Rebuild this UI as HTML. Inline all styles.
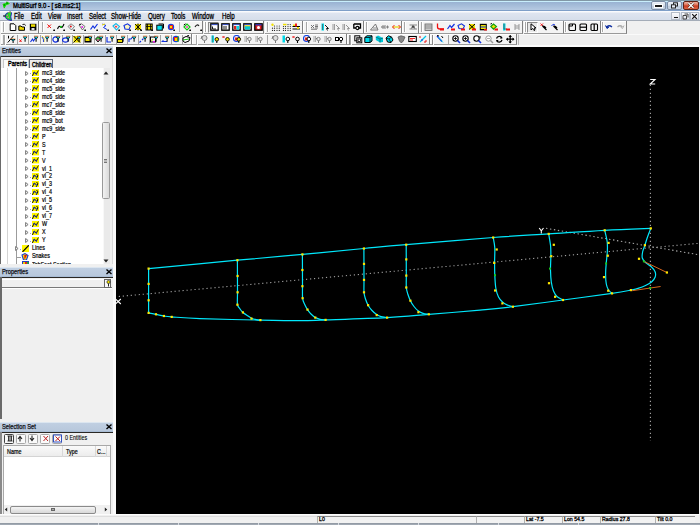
<!DOCTYPE html><html><head><meta charset="utf-8"><style>
*{margin:0;padding:0;box-sizing:border-box}
html,body{width:700px;height:525px;overflow:hidden;background:#f0f0f0;font-family:"Liberation Sans",sans-serif;color:#000}
.a{position:absolute}
.t{position:absolute;font-size:6.6px;line-height:8px;white-space:nowrap;-webkit-text-stroke:0.15px #000}
#title{left:0;top:0;width:700px;height:11px;background:linear-gradient(#3a4250 0,#c8eefc 1px,#c8eefc 1.5px,#98b2d2 2px,#b6cae2 10px,#7f9fc8 10px,#7f9fc8 11px)}
#menu{left:0;top:11px;width:700px;height:10px;background:linear-gradient(#fafbfd 0,#fafbfd 1px,#dfe5f0 2px,#d6deea 9px,#a4acb8 9px)}
#view{left:116px;top:47px;width:583px;height:467px;background:#000}
.cap{position:absolute;left:0;width:113px;height:9.5px;background:linear-gradient(#dce6f0 0,#dce6f0 0.8px,#c0cfe2 1px,#b8c8dc 8.5px,#a8bcd4 9.5px)}
.capl{position:absolute;left:0;width:113px;height:1.2px;background:#2a2824}
.tb{position:absolute;background:#f7f7f7;border:1px solid #d6d6d6;border-top-color:#fff;border-left-color:#fff}
.tr{font-size:7px;transform:scaleX(0.77);transform-origin:0 0;-webkit-text-stroke:0.22px #000}
.ts{font-size:5.8px;line-height:7px;transform:scaleX(0.9);transform-origin:0 0;-webkit-text-stroke:0.3px #000}
.sep{position:absolute;width:1px;background:#9a9a9a}
</style></head><body>
<div class="a" id="title"></div>
<div class="t" style="left:13px;top:1.5px;font-size:7.4px;color:#000;-webkit-text-stroke:0.38px #000;transform:scaleX(0.8);transform-origin:0 0">MultiSurf 9.0 - [ s8.ms2:1]</div>
<div class="a" style="left:650.5px;top:1px;width:15px;height:9px;border:1px solid #7d8ea6;border-radius:2px;background:linear-gradient(#eef3fa,#d4deea 50%,#bccadc 51%,#ccd8e6)"></div>
<div class="a" style="left:654.5px;top:4.5px;width:7px;height:2.5px;background:#1a1a1a;outline:0.7px solid #fff"></div>
<div class="a" style="left:666.5px;top:1px;width:15.5px;height:9px;border:1px solid #7d8ea6;border-radius:2px;background:linear-gradient(#eef3fa,#d4deea 50%,#bccadc 51%,#ccd8e6)"></div>
<svg class="a" style="left:670px;top:2px" width="9" height="7"><rect x="3.5" y="0.8" width="4" height="3.2" fill="none" stroke="#222" stroke-width="1"/><rect x="1.5" y="2.8" width="4" height="3.2" fill="#e8eef6" stroke="#222" stroke-width="1"/></svg>
<div class="a" style="left:682.5px;top:1px;width:16.5px;height:9px;border:1px solid #5e2418;border-radius:2px;background:linear-gradient(#f0b8a8,#dc6a50 45%,#c83a20 55%,#e06848)"></div>
<svg class="a" style="left:686px;top:2px" width="10" height="7"><path d="M2.5 1 L7.5 6 M7.5 1 L2.5 6" stroke="#3a1a10" stroke-width="2.4"/><path d="M2.5 1 L7.5 6 M7.5 1 L2.5 6" stroke="#fff" stroke-width="1.4"/></svg>
<div class="a" id="menu"></div>
<div class="t" style="left:14px;top:11.6px;font-size:8.2px;line-height:9px;-webkit-text-stroke:0.3px #000;transform:scaleX(0.75);transform-origin:0 0">File</div>
<div class="t" style="left:31px;top:11.6px;font-size:8.2px;line-height:9px;-webkit-text-stroke:0.3px #000;transform:scaleX(0.75);transform-origin:0 0">Edit</div>
<div class="t" style="left:48px;top:11.6px;font-size:8.2px;line-height:9px;-webkit-text-stroke:0.3px #000;transform:scaleX(0.75);transform-origin:0 0">View</div>
<div class="t" style="left:67px;top:11.6px;font-size:8.2px;line-height:9px;-webkit-text-stroke:0.3px #000;transform:scaleX(0.75);transform-origin:0 0">Insert</div>
<div class="t" style="left:89px;top:11.6px;font-size:8.2px;line-height:9px;-webkit-text-stroke:0.3px #000;transform:scaleX(0.75);transform-origin:0 0">Select</div>
<div class="t" style="left:111px;top:11.6px;font-size:8.2px;line-height:9px;-webkit-text-stroke:0.3px #000;transform:scaleX(0.75);transform-origin:0 0">Show-Hide</div>
<div class="t" style="left:148px;top:11.6px;font-size:8.2px;line-height:9px;-webkit-text-stroke:0.3px #000;transform:scaleX(0.75);transform-origin:0 0">Query</div>
<div class="t" style="left:171px;top:11.6px;font-size:8.2px;line-height:9px;-webkit-text-stroke:0.3px #000;transform:scaleX(0.75);transform-origin:0 0">Tools</div>
<div class="t" style="left:192px;top:11.6px;font-size:8.2px;line-height:9px;-webkit-text-stroke:0.3px #000;transform:scaleX(0.75);transform-origin:0 0">Window</div>
<div class="t" style="left:222px;top:11.6px;font-size:8.2px;line-height:9px;-webkit-text-stroke:0.3px #000;transform:scaleX(0.75);transform-origin:0 0">Help</div>
<div class="a" style="left:671.0px;top:11.5px;width:9px;height:8.5px;border:1px solid #b4bcc8;background:linear-gradient(#fafbfd,#e2e6ee)"></div>
<div class="a" style="left:680.5px;top:11.5px;width:9px;height:8.5px;border:1px solid #b4bcc8;background:linear-gradient(#fafbfd,#e2e6ee)"></div>
<div class="a" style="left:690.0px;top:11.5px;width:9px;height:8.5px;border:1px solid #b4bcc8;background:linear-gradient(#fafbfd,#e2e6ee)"></div>
<div class="a" style="left:673.5px;top:16.5px;width:4px;height:1.3px;background:#111"></div>
<svg class="a" style="left:681.5px;top:12.5px" width="7" height="7"><path d="M2.5 1 H6 V4.5 M1 2.5 H4.5 V6 H1 Z" fill="none" stroke="#333" stroke-width="0.9"/></svg>
<svg class="a" style="left:691px;top:12.5px" width="7" height="7"><path d="M1.2 1.2 L5.8 5.8 M5.8 1.2 L1.2 5.8" stroke="#111" stroke-width="1.2"/></svg>
<svg class="a" style="left:0px;top:11px" width="13" height="10"><path d="M10.5 0.8 Q5 2 5 5 Q5 8.5 11.5 9.5 Q10 6 11.5 2 Z" fill="#20e020" stroke="#1010c0" stroke-width="0.9"/><path d="M3 5 H5.5" stroke="#000" stroke-width="1"/><circle cx="7.3" cy="4.3" r="0.8" fill="#ff40c0"/><circle cx="8.3" cy="6.3" r="0.8" fill="#ff40c0"/><path d="M8 1.5 L11 1" stroke="#f0f000" stroke-width="0.6"/></svg>
<svg class="a" style="left:0px;top:0px" width="12" height="11" viewBox="0.5 0.5 10 10" ><path d="M2 4.5 Q3 2.5 5 3 L6 1.5 L7.5 2.2 L9.5 3.5 L8 5 L6 5.5 L4.5 8.5 L3 8 Z" fill="#10e010" stroke="#e8b0f0" stroke-width="0.7"/><circle cx="4" cy="5" r="0.7" fill="#007000"/><circle cx="6.5" cy="3.5" r="0.7" fill="#007000"/></svg>
<div class="a" style="left:0;top:21px;width:700px;height:25px;background:#f0f0f0"></div><div class="a" style="left:0.5px;top:21.0px;width:38.2px;height:12.7px;background:#f4f4f4;border-right:1px solid #808080;border-bottom:1px solid #9a9a9a;box-shadow:inset 1px 1px 0 #fff"></div><div class="a" style="left:2.5px;top:22.2px;width:1px;height:10.0px;background:#a8a8a8;box-shadow:1px 0 0 #fff"></div><div class="a" style="left:39.0px;top:21.0px;width:164.2px;height:12.7px;background:#f4f4f4;border-right:1px solid #808080;border-bottom:1px solid #9a9a9a;box-shadow:inset 1px 1px 0 #fff"></div><div class="a" style="left:41.5px;top:22.2px;width:1px;height:10.0px;background:#a8a8a8;box-shadow:1px 0 0 #fff"></div><div class="a" style="left:178.5px;top:22.0px;width:1px;height:10.0px;background:#b8b8b8"></div><div class="a" style="left:203.5px;top:21.0px;width:60.8px;height:12.7px;background:#f4f4f4;border-right:1px solid #808080;border-bottom:1px solid #9a9a9a;box-shadow:inset 1px 1px 0 #fff"></div><div class="a" style="left:205.4px;top:22.2px;width:1px;height:10.0px;background:#a8a8a8;box-shadow:1px 0 0 #fff"></div><div class="a" style="left:264.5px;top:21.0px;width:38.3px;height:12.7px;background:#f4f4f4;border-right:1px solid #808080;border-bottom:1px solid #9a9a9a;box-shadow:inset 1px 1px 0 #fff"></div><div class="a" style="left:266.6px;top:22.2px;width:1px;height:10.0px;background:#a8a8a8;box-shadow:1px 0 0 #fff"></div><div class="a" style="left:303.0px;top:21.0px;width:60.9px;height:12.7px;background:#f4f4f4;border-right:1px solid #808080;border-bottom:1px solid #9a9a9a;box-shadow:inset 1px 1px 0 #fff"></div><div class="a" style="left:305.6px;top:22.2px;width:1px;height:10.0px;background:#a8a8a8;box-shadow:1px 0 0 #fff"></div><div class="a" style="left:364.0px;top:21.0px;width:38.2px;height:12.7px;background:#f4f4f4;border-right:1px solid #808080;border-bottom:1px solid #9a9a9a;box-shadow:inset 1px 1px 0 #fff"></div><div class="a" style="left:365.7px;top:22.2px;width:1px;height:10.0px;background:#a8a8a8;box-shadow:1px 0 0 #fff"></div><div class="a" style="left:402.3px;top:21.0px;width:16.7px;height:12.7px;background:#f4f4f4;border-right:1px solid #808080;border-bottom:1px solid #9a9a9a;box-shadow:inset 1px 1px 0 #fff"></div><div class="a" style="left:403.6px;top:22.2px;width:1px;height:10.0px;background:#a8a8a8;box-shadow:1px 0 0 #fff"></div><div class="a" style="left:419.0px;top:21.0px;width:104.3px;height:12.7px;background:#f4f4f4;border-right:1px solid #808080;border-bottom:1px solid #9a9a9a;box-shadow:inset 1px 1px 0 #fff"></div><div class="a" style="left:420.5px;top:22.2px;width:1px;height:10.0px;background:#a8a8a8;box-shadow:1px 0 0 #fff"></div><div class="a" style="left:523.5px;top:21.0px;width:40.5px;height:12.7px;background:#f4f4f4;border-right:1px solid #808080;border-bottom:1px solid #9a9a9a;box-shadow:inset 1px 1px 0 #fff"></div><div class="a" style="left:524.8px;top:22.2px;width:1px;height:10.0px;background:#a8a8a8;box-shadow:1px 0 0 #fff"></div><div class="a" style="left:563.8px;top:21.0px;width:37.4px;height:12.7px;background:#f4f4f4;border-right:1px solid #808080;border-bottom:1px solid #9a9a9a;box-shadow:inset 1px 1px 0 #fff"></div><div class="a" style="left:564.6px;top:22.2px;width:1px;height:10.0px;background:#a8a8a8;box-shadow:1px 0 0 #fff"></div><div class="a" style="left:601.0px;top:21.0px;width:26.1px;height:12.7px;background:#f4f4f4;border-right:1px solid #808080;border-bottom:1px solid #9a9a9a;box-shadow:inset 1px 1px 0 #fff"></div><div class="a" style="left:601.8px;top:22.2px;width:1px;height:10.0px;background:#a8a8a8;box-shadow:1px 0 0 #fff"></div><div class="a" style="left:208px;top:22.3px;width:10.6px;height:10.4px;border:1px solid #8a8a8a;border-right-color:#fff;border-bottom-color:#fff;background:#e8e8e8"></div><div class="a" style="left:527px;top:22.3px;width:10.6px;height:10.4px;border:1px solid #8a8a8a;border-right-color:#fff;border-bottom-color:#fff;background:#e8e8e8"></div><svg class="a" style="left:8.5px;top:23.2px" width="9" height="8.5" viewBox="0 0 9 8.5"><path d="M1.2 0.8 H5 L6.8 2.6 V7.5 H1.2 Z" fill="#fff" stroke="#000" stroke-width="1"/></svg><svg class="a" style="left:18.0px;top:23.2px" width="9" height="8.5" viewBox="0 0 9 8.5"><path d="M0.8 3 H3 L4 4 H6.5 V7.3 H0.8 Z" fill="#f0d800" stroke="#000" stroke-width="1"/><path d="M4.5 1.5 Q6.5 0.5 7.8 2.5" stroke="#000" fill="none" stroke-width="0.9"/></svg><svg class="a" style="left:29.0px;top:23.2px" width="9" height="8.5" viewBox="0 0 9 8.5"><rect x="0.8" y="0.8" width="6.6" height="6.6" fill="#000"/><rect x="2" y="1.3" width="4.2" height="2.5" fill="#f0e000"/><rect x="2.5" y="5" width="3" height="2" fill="#ddd"/></svg><svg class="a" style="left:47.0px;top:23.2px" width="9" height="8.5" viewBox="0 0 9 8.5"><path d="M0.5 1.5 L4 5 M4 1.5 L0.5 5" stroke="#f01010" stroke-width="1"/><path d="M6.5 7.8 L7.8 6.5 V8 Z" fill="#000"/><rect x="6.3" y="6.6" width="1.6" height="1.4" fill="#000"/></svg><svg class="a" style="left:57.0px;top:23.2px" width="9" height="8.5" viewBox="0 0 9 8.5"><path d="M0.5 6 Q2 2 3.5 4 T7 1" stroke="#000" fill="none" stroke-width="1.1"/><circle cx="4" cy="3.8" r="1.1" fill="#10c010"/><path d="M6.5 7.8 L7.8 6.5 V8 Z" fill="#000"/><rect x="6.3" y="6.6" width="1.6" height="1.4" fill="#000"/></svg><svg class="a" style="left:67.0px;top:23.2px" width="9" height="8.5" viewBox="0 0 9 8.5"><path d="M1 3.5 L4 0.8 L7.5 3.5 L4.5 7 Z" fill="#e8f4f8" stroke="#666" stroke-width="0.8"/><circle cx="3.8" cy="3.6" r="1" fill="#e01010"/><path d="M6.5 7.8 L7.8 6.5 V8 Z" fill="#000"/><rect x="6.3" y="6.6" width="1.6" height="1.4" fill="#000"/></svg><svg class="a" style="left:78.0px;top:23.2px" width="9" height="8.5" viewBox="0 0 9 8.5"><path d="M1 2 L3.5 0.8 L7 3.5 L4.5 7 Z" fill="#f4f4f4" stroke="#555" stroke-width="0.8"/><circle cx="4.2" cy="4" r="1" fill="#e020e0"/><circle cx="2" cy="1.5" r="0.8" fill="#000"/><path d="M6.5 7.8 L7.8 6.5 V8 Z" fill="#000"/><rect x="6.3" y="6.6" width="1.6" height="1.4" fill="#000"/></svg><svg class="a" style="left:89.5px;top:23.2px" width="9" height="8.5" viewBox="0 0 9 8.5"><path d="M0.5 6.5 L3 3 L4.5 5 L7.5 1" stroke="#1030e0" fill="none" stroke-width="1.2"/><path d="M6.5 7.8 L7.8 6.5 V8 Z" fill="#000"/><rect x="6.3" y="6.6" width="1.6" height="1.4" fill="#000"/></svg><svg class="a" style="left:101.0px;top:23.2px" width="9" height="8.5" viewBox="0 0 9 8.5"><path d="M1.5 1 L5 2.5 L2.5 4.5 L6 6.5" stroke="#1030e0" fill="none" stroke-width="1"/><path d="M1 2 L4 1" stroke="#e0d000" stroke-width="1"/><path d="M6.5 7.8 L7.8 6.5 V8 Z" fill="#000"/><rect x="6.3" y="6.6" width="1.6" height="1.4" fill="#000"/></svg><svg class="a" style="left:112.0px;top:23.2px" width="9" height="8.5" viewBox="0 0 9 8.5"><path d="M1 3 L4 0.6 L7.5 3.5 L4.5 7 Z" fill="#ffe0e0" stroke="#10b8e8" stroke-width="1.1"/><circle cx="4" cy="3.7" r="0.9" fill="#f02020"/><path d="M6.5 7.8 L7.8 6.5 V8 Z" fill="#000"/><rect x="6.3" y="6.6" width="1.6" height="1.4" fill="#000"/></svg><svg class="a" style="left:122.5px;top:23.2px" width="9" height="8.5" viewBox="0 0 9 8.5"><path d="M1 2.5 L4.5 0.8 L7.5 3 L6 6.5 L2 6 Z" fill="#fff8c0" stroke="#1030e0" stroke-width="1.1"/><path d="M6.5 7.8 L7.8 6.5 V8 Z" fill="#000"/><rect x="6.3" y="6.6" width="1.6" height="1.4" fill="#000"/></svg><svg class="a" style="left:133.5px;top:23.2px" width="9" height="8.5" viewBox="0 0 9 8.5"><rect x="1" y="1" width="6" height="6" fill="#f0e000"/><path d="M1 1 L7 7 M7 1 L1 7 M4 0.5 V7.5" stroke="#000" stroke-width="0.9"/><path d="M6.5 7.8 L7.8 6.5 V8 Z" fill="#000"/><rect x="6.3" y="6.6" width="1.6" height="1.4" fill="#000"/></svg><svg class="a" style="left:144.5px;top:23.2px" width="9" height="8.5" viewBox="0 0 9 8.5"><rect x="1" y="1" width="6.2" height="6" fill="#f0e000" stroke="#000" stroke-width="1"/><path d="M2.5 1 V7 M5.5 1 V7 M1 3.5 H7" stroke="#000" stroke-width="0.8"/><path d="M6.5 7.8 L7.8 6.5 V8 Z" fill="#000"/><rect x="6.3" y="6.6" width="1.6" height="1.4" fill="#000"/></svg><svg class="a" style="left:156.0px;top:23.2px" width="9" height="8.5" viewBox="0 0 9 8.5"><rect x="0.8" y="2.2" width="5.5" height="5" fill="#00e0f0" stroke="#000" stroke-width="1"/><path d="M2.5 1 H7.5 V5.5" stroke="#000" fill="none" stroke-width="1"/></svg><svg class="a" style="left:167.0px;top:23.2px" width="9" height="8.5" viewBox="0 0 9 8.5"><circle cx="4" cy="4" r="3.2" fill="#1040e0"/><rect x="2.5" y="2" width="3.5" height="4" fill="#f02020"/><rect x="3" y="3" width="2" height="2" fill="#f0e000"/><path d="M6.5 7.8 L7.8 6.5 V8 Z" fill="#000"/><rect x="6.3" y="6.6" width="1.6" height="1.4" fill="#000"/></svg><svg class="a" style="left:183.0px;top:23.2px" width="9" height="8.5" viewBox="0 0 9 8.5"><path d="M1 4 L4 1 L7 4 L4 7 Z" fill="#fff" stroke="#10c010" stroke-width="1.2"/><circle cx="4" cy="4" r="1" fill="#e040a0"/><path d="M0.8 2 L2.5 0.8" stroke="#000"/><path d="M6.5 7.8 L7.8 6.5 V8 Z" fill="#000"/><rect x="6.3" y="6.6" width="1.6" height="1.4" fill="#000"/></svg><svg class="a" style="left:194.0px;top:23.2px" width="9" height="8.5" viewBox="0 0 9 8.5"><path d="M1 4 Q3 0.5 5 3" stroke="#222" fill="none" stroke-width="1.2"/><path d="M6.5 7.8 L7.8 6.5 V8 Z" fill="#000"/><rect x="6.3" y="6.6" width="1.6" height="1.4" fill="#000"/></svg><svg class="a" style="left:209.5px;top:23.2px" width="9" height="8.5" viewBox="0 0 9 8.5"><rect x="0.8" y="0.8" width="7.4" height="6.4" fill="#fff" stroke="#000" stroke-width="1.3"/><rect x="1.4" y="1.3" width="6.2" height="0.8" fill="#1a3ad0"/><path d="M2.5 3.5 V6 H6" stroke="#000" fill="none" stroke-width="0.9"/></svg><svg class="a" style="left:220.5px;top:23.2px" width="9" height="8.5" viewBox="0 0 9 8.5"><rect x="0.8" y="0.8" width="7.4" height="6.4" fill="#fff" stroke="#000" stroke-width="1.3"/><rect x="1.4" y="1.3" width="6.2" height="0.8" fill="#1a3ad0"/><path d="M3 3 V6.5 M5 3 V6.5" stroke="#000" stroke-width="0.9"/></svg><svg class="a" style="left:231.5px;top:23.2px" width="9" height="8.5" viewBox="0 0 9 8.5"><rect x="0.8" y="0.8" width="7.4" height="6.4" fill="#fff" stroke="#000" stroke-width="1.3"/><rect x="1.4" y="1.3" width="6.2" height="0.8" fill="#1a3ad0"/><rect x="2" y="3" width="2.5" height="3.5" fill="#e02020"/><rect x="4.5" y="3" width="2.5" height="3.5" fill="#00d8e8"/></svg><svg class="a" style="left:242.5px;top:23.2px" width="9" height="8.5" viewBox="0 0 9 8.5"><rect x="0.8" y="0.8" width="7.4" height="6.4" fill="#fff" stroke="#000" stroke-width="1.3"/><rect x="1.4" y="1.3" width="6.2" height="0.8" fill="#1a3ad0"/><rect x="2" y="3" width="5" height="3.5" fill="#00c8d8"/><rect x="1.5" y="2.3" width="6" height="1" fill="#f0d000"/></svg><svg class="a" style="left:253.5px;top:23.2px" width="9" height="8.5" viewBox="0 0 9 8.5"><rect x="0.8" y="0.8" width="7.4" height="6.4" fill="#e02020" stroke="#000" stroke-width="1.3"/><rect x="1.4" y="1.2" width="6.2" height="1.2" fill="#1a3ad0"/><circle cx="4.5" cy="4.5" r="1.5" fill="#fff"/></svg><svg class="a" style="left:270.5px;top:23.2px" width="9" height="8.5" viewBox="0 0 9 8.5"><g fill="#222"><circle cx="3.5" cy="3" r="0.6"/><circle cx="3.5" cy="5.2" r="0.6"/><circle cx="3.5" cy="7.4" r="0.6"/><circle cx="6" cy="3" r="0.6"/><circle cx="6" cy="5.2" r="0.6"/><circle cx="6" cy="7.4" r="0.6"/><circle cx="8.3" cy="3" r="0.6"/><circle cx="8.3" cy="5.2" r="0.6"/><circle cx="8.3" cy="7.4" r="0.6"/></g><circle cx="1.5" cy="1.8" r="1.2" fill="#f0e000"/><circle cx="1.5" cy="5.2" r="0.6" fill="#222"/><circle cx="1.5" cy="7.4" r="0.6" fill="#222"/></svg><svg class="a" style="left:281.5px;top:23.2px" width="9" height="8.5" viewBox="0 0 9 8.5"><g fill="#222"><circle cx="1.5" cy="3.6" r="0.6"/><circle cx="1.5" cy="5.5" r="0.6"/><circle cx="1.5" cy="7.4" r="0.6"/><circle cx="3.5" cy="3.6" r="0.6"/><circle cx="3.5" cy="5.5" r="0.6"/><circle cx="3.5" cy="7.4" r="0.6"/><circle cx="6" cy="3.6" r="0.6"/><circle cx="6" cy="5.5" r="0.6"/><circle cx="6" cy="7.4" r="0.6"/><circle cx="8.3" cy="3.6" r="0.6"/><circle cx="8.3" cy="5.5" r="0.6"/><circle cx="8.3" cy="7.4" r="0.6"/></g><rect x="1" y="0.8" width="3.5" height="1.5" fill="#f0e000"/><circle cx="6" cy="1.6" r="0.6" fill="#222"/><circle cx="8.3" cy="1.6" r="0.6" fill="#222"/></svg><svg class="a" style="left:292.0px;top:23.2px" width="9" height="8.5" viewBox="0 0 9 8.5"><path d="M0.5 3.5 H8 M0.5 6 H8" stroke="#000" stroke-width="1"/><rect x="3" y="0.5" width="2" height="3" fill="#f02020"/><rect x="1" y="1.5" width="2" height="1.5" fill="#f0e000"/><rect x="5" y="4" width="2" height="2" fill="#f0e000"/></svg><svg class="a" style="left:310.0px;top:23.2px" width="9" height="8.5" viewBox="0 0 9 8.5"><path d="M1 2 L4 5 M1 5 L4 2 M5 2 H8 M5 5 H8 M5 3.5 H8" stroke="#666" stroke-width="0.9"/><rect x="1" y="5.5" width="6" height="1.5" fill="#999"/></svg><svg class="a" style="left:320.5px;top:23.2px" width="9" height="8.5" viewBox="0 0 9 8.5"><rect x="0.5" y="0.5" width="2.5" height="7" fill="#00d8e8"/><path d="M1.5 1 V7" stroke="#555" stroke-width="0.7"/><path d="M4 2 L7.5 5.5 L5.5 5.5 L6.5 7.5" stroke="#000" fill="none" stroke-width="0.9"/></svg><svg class="a" style="left:331.5px;top:23.2px" width="9" height="8.5" viewBox="0 0 9 8.5"><path d="M1 1 V7 M2.5 1 V7" stroke="#888" stroke-width="0.8"/><path d="M4 2 L7.5 5.5 L5.5 5.5 L6.5 7.5" stroke="#888" fill="none" stroke-width="0.9"/></svg><svg class="a" style="left:342.0px;top:23.2px" width="9" height="8.5" viewBox="0 0 9 8.5"><path d="M1 1 V7 M2.5 1 V7" stroke="#888" stroke-width="0.8"/><path d="M4 2 L7.5 5.5 L5.5 5.5 L6.5 7.5" stroke="#888" fill="none" stroke-width="0.9"/></svg><svg class="a" style="left:353.0px;top:23.2px" width="9" height="8.5" viewBox="0 0 9 8.5"><path d="M0.8 1 H7.5 V5 H5" stroke="#000" fill="none" stroke-width="1.3"/><path d="M0.8 1 V5 H3" stroke="#000" fill="none" stroke-width="1.3"/><circle cx="4.5" cy="5" r="1.6" fill="none" stroke="#000" stroke-width="1.1"/></svg><svg class="a" style="left:369.5px;top:23.2px" width="9" height="8.5" viewBox="0 0 9 8.5"><path d="M0.5 7 L5.5 1 L8 7 Z" fill="none" stroke="#777" stroke-width="1"/><path d="M3 5 H7" stroke="#777" stroke-width="0.8"/></svg><svg class="a" style="left:381.0px;top:23.2px" width="9" height="8.5" viewBox="0 0 9 8.5"><path d="M0.5 4 H8 M2.5 2 L0.5 4 L2.5 6 M4.5 2 L2.5 4 L4.5 6 M6.5 2.5 V5.5" stroke="#777" fill="none" stroke-width="0.9"/></svg><svg class="a" style="left:392.0px;top:23.2px" width="9" height="8.5" viewBox="0 0 9 8.5"><path d="M0.5 4 H8.5" stroke="#e8d000" stroke-width="1.2"/><path d="M2.5 2 L0.5 4 L2.5 6 M6.5 2 L8.5 4 L6.5 6" stroke="#f02020" fill="none" stroke-width="1"/></svg><svg class="a" style="left:408.5px;top:23.2px" width="9" height="8.5" viewBox="0 0 9 8.5"><path d="M0.5 2 H8 M0.5 6 H8 M4 2 L2 6 M4 2 L6 6" stroke="#777" stroke-width="0.9" fill="none"/><rect x="3" y="3.2" width="2.5" height="1.5" fill="#333"/></svg><svg class="a" style="left:424.0px;top:23.2px" width="9" height="8.5" viewBox="0 0 9 8.5"><rect x="1" y="1" width="7" height="6.5" fill="#ccc" stroke="#666" stroke-width="0.8"/><path d="M1 3 H8 M1 5 H8" stroke="#777" stroke-width="0.7"/></svg><svg class="a" style="left:435.5px;top:23.2px" width="9" height="8.5" viewBox="0 0 9 8.5"><path d="M1.5 0.5 V4 Q1.5 6 4 6 H8" stroke="#f01010" fill="none" stroke-width="1.3"/><rect x="4" y="5.5" width="4" height="2" fill="#f01010"/></svg><svg class="a" style="left:446.5px;top:23.2px" width="9" height="8.5" viewBox="0 0 9 8.5"><path d="M0.5 6 L3 2.5 L4.5 4.5 L7.5 1" stroke="#1030e0" fill="none" stroke-width="1.2"/><rect x="4" y="5.5" width="4" height="2" fill="#f01010"/></svg><svg class="a" style="left:457.0px;top:23.2px" width="9" height="8.5" viewBox="0 0 9 8.5"><path d="M1 2.5 L4.5 0.8 L7.5 3 L6 6 L2 5.5 Z" fill="#fffac0" stroke="#1030e0" stroke-width="1.1"/><rect x="4" y="5.5" width="4" height="2" fill="#f01010"/></svg><svg class="a" style="left:468.0px;top:23.2px" width="9" height="8.5" viewBox="0 0 9 8.5"><rect x="1" y="1" width="6" height="5.5" fill="#f0e000"/><path d="M1 1 L7 6.5 M7 1 L1 6.5" stroke="#000" stroke-width="1"/><rect x="4" y="5.5" width="4" height="2" fill="#f01010"/></svg><svg class="a" style="left:479.0px;top:23.2px" width="9" height="8.5" viewBox="0 0 9 8.5"><rect x="0.8" y="0.8" width="7" height="6.5" fill="#000"/><rect x="1.8" y="2" width="5" height="4" fill="#f0e000"/><path d="M1.8 4 H6.8" stroke="#1030e0" stroke-width="1"/><rect x="5" y="6" width="3" height="1.5" fill="#f01010"/></svg><svg class="a" style="left:490.0px;top:23.2px" width="9" height="8.5" viewBox="0 0 9 8.5"><path d="M0.8 3.5 L3.5 1 L6.5 3.5 L3.5 6.2 Z" fill="#f0e000" stroke="#10a010" stroke-width="1.1"/><path d="M0.5 1 L2 0.5" stroke="#000"/><rect x="4.5" y="5.5" width="3.5" height="2" fill="#f01010"/></svg><svg class="a" style="left:501.5px;top:23.2px" width="9" height="8.5" viewBox="0 0 9 8.5"><rect x="1" y="0.5" width="2.5" height="7" fill="#00d8e8"/><path d="M2 0.5 V6 H5" stroke="#555" stroke-width="0.8" fill="none"/><rect x="4" y="5.5" width="4" height="2" fill="#f01010"/></svg><svg class="a" style="left:512.5px;top:23.2px" width="9" height="8.5" viewBox="0 0 9 8.5"><path d="M2 1 V7 M6 1 V7 M2 3 H6 M2 5 H6" stroke="#999" stroke-width="1"/></svg><svg class="a" style="left:528.5px;top:23.2px" width="9" height="8.5" viewBox="0 0 9 8.5"><path d="M2 0.8 L2 7 L3.5 5.5 L5 7.5 L6 7 L5 5 L7 5 Z" fill="#fff" stroke="#000" stroke-width="1"/></svg><svg class="a" style="left:539.5px;top:23.2px" width="9" height="8.5" viewBox="0 0 9 8.5"><path d="M0.5 0.5 L3 3 M3 0.5 L0.5 3" stroke="#f01010" stroke-width="0.9"/><path d="M2.5 3 L6.5 7 M2.5 3 Q5 3 6 5" stroke="#000" fill="none" stroke-width="1.2"/></svg><svg class="a" style="left:551.0px;top:23.2px" width="9" height="8.5" viewBox="0 0 9 8.5"><path d="M0.5 3 Q2 0 4 2" stroke="#1030e0" fill="none" stroke-width="1"/><path d="M2.5 3 L6.5 7 M2.5 3 Q5 3 6 5" stroke="#000" fill="none" stroke-width="1.2"/></svg><svg class="a" style="left:568.0px;top:23.2px" width="9" height="8.5" viewBox="0 0 9 8.5"><rect x="1" y="1" width="6.5" height="6.5" rx="1" fill="none" stroke="#000" stroke-width="1.1"/><path d="M1 3 H4.5 V1" stroke="#000" fill="none" stroke-width="1"/></svg><svg class="a" style="left:579.0px;top:23.2px" width="9" height="8.5" viewBox="0 0 9 8.5"><rect x="1" y="1" width="6.5" height="6.5" rx="1" fill="none" stroke="#000" stroke-width="1.1"/><path d="M1 4.2 H7.5" stroke="#000" stroke-width="1.2"/></svg><svg class="a" style="left:590.0px;top:23.2px" width="9" height="8.5" viewBox="0 0 9 8.5"><rect x="1" y="1" width="6.5" height="6.5" rx="1" fill="none" stroke="#000" stroke-width="1.1"/><path d="M4.2 1 V7.5" stroke="#000" stroke-width="1.2"/></svg><svg class="a" style="left:604.5px;top:23.2px" width="9" height="8.5" viewBox="0 0 9 8.5"><path d="M2 4 Q4 1.5 7 4" stroke="#1030a0" fill="none" stroke-width="1.3"/><path d="M0.5 2.5 L2 5.5 L4 4" stroke="#1030a0" fill="#1030a0" stroke-width="1"/></svg><svg class="a" style="left:615.5px;top:23.2px" width="9" height="8.5" viewBox="0 0 9 8.5"><path d="M1.5 4 Q4 1.5 6.5 4" stroke="#aaa" fill="none" stroke-width="1.2"/><path d="M8 2.5 L6.5 5.5 L4.5 4" stroke="#aaa" fill="none" stroke-width="0.9"/></svg><div class="a" style="left:0.5px;top:33.8px;width:191.7px;height:11.4px;background:#f4f4f4;border-right:1px solid #808080;border-bottom:1px solid #9a9a9a;box-shadow:inset 1px 1px 0 #fff"></div><div class="a" style="left:2.5px;top:35.0px;width:1px;height:10.0px;background:#a8a8a8;box-shadow:1px 0 0 #fff"></div><div class="a" style="left:3.7px;top:35.0px;width:1px;height:10.0px;background:#a8a8a8;box-shadow:1px 0 0 #fff"></div><div class="a" style="left:16.5px;top:34.8px;width:1px;height:9.5px;background:#a4a4a4"></div><div class="a" style="left:28.0px;top:34.8px;width:1px;height:9.5px;background:#a4a4a4"></div><div class="a" style="left:39.5px;top:34.8px;width:1px;height:9.5px;background:#a4a4a4"></div><div class="a" style="left:50.5px;top:34.8px;width:1px;height:9.5px;background:#a4a4a4"></div><div class="a" style="left:61.5px;top:34.8px;width:1px;height:9.5px;background:#a4a4a4"></div><div class="a" style="left:71.5px;top:34.8px;width:1px;height:9.5px;background:#a4a4a4"></div><div class="a" style="left:82.5px;top:34.8px;width:1px;height:9.5px;background:#a4a4a4"></div><div class="a" style="left:93.5px;top:34.8px;width:1px;height:9.5px;background:#a4a4a4"></div><div class="a" style="left:104.5px;top:34.8px;width:1px;height:9.5px;background:#a4a4a4"></div><div class="a" style="left:115.5px;top:34.8px;width:1px;height:9.5px;background:#a4a4a4"></div><div class="a" style="left:126.5px;top:34.8px;width:1px;height:9.5px;background:#a4a4a4"></div><div class="a" style="left:138.0px;top:34.8px;width:1px;height:9.5px;background:#a4a4a4"></div><div class="a" style="left:149.0px;top:34.8px;width:1px;height:9.5px;background:#a4a4a4"></div><div class="a" style="left:159.5px;top:34.8px;width:1px;height:9.5px;background:#a4a4a4"></div><div class="a" style="left:170.5px;top:34.8px;width:1px;height:9.5px;background:#a4a4a4"></div><div class="a" style="left:181.5px;top:34.8px;width:1px;height:9.5px;background:#a4a4a4"></div><div class="a" style="left:192.3px;top:33.8px;width:154.9px;height:11.4px;background:#f4f4f4;border-right:1px solid #808080;border-bottom:1px solid #9a9a9a;box-shadow:inset 1px 1px 0 #fff"></div><div class="a" style="left:196.0px;top:35.0px;width:1px;height:10.0px;background:#a8a8a8;box-shadow:1px 0 0 #fff"></div><div class="a" style="left:266.5px;top:34.8px;width:1px;height:9.5px;background:#a4a4a4"></div><div class="a" style="left:347.3px;top:33.8px;width:82.4px;height:11.4px;background:#f4f4f4;border-right:1px solid #808080;border-bottom:1px solid #9a9a9a;box-shadow:inset 1px 1px 0 #fff"></div><div class="a" style="left:349.5px;top:35.0px;width:1px;height:10.0px;background:#a8a8a8;box-shadow:1px 0 0 #fff"></div><div class="a" style="left:430.0px;top:33.8px;width:87.3px;height:11.4px;background:#f4f4f4;border-right:1px solid #808080;border-bottom:1px solid #9a9a9a;box-shadow:inset 1px 1px 0 #fff"></div><div class="a" style="left:431.8px;top:35.0px;width:1px;height:10.0px;background:#a8a8a8;box-shadow:1px 0 0 #fff"></div><div class="a" style="left:447.5px;top:34.8px;width:1px;height:9.5px;background:#a4a4a4"></div><div class="a" style="left:518px;top:34px;width:182px;height:11px;border-left:1px solid #b8b8b8;border-top:1px solid #fafafa;background:#efefef"></div><div class="a" style="left:349px;top:35px;width:1px;height:10px;background:#888"></div><div class="a" style="left:432px;top:35px;width:1px;height:10px;background:#888"></div><svg class="a" style="left:7.0px;top:35.0px" width="9" height="8.5" viewBox="0 0 9 8.5"><path d="M1.5 0.8 V3.5 M0.8 7.5 L6.5 0.8" stroke="#000" stroke-width="1"/><path d="M3.6 4 H8.6 L6.6 6.3 V8 H5.6 V6.3 Z" fill="#000"/><circle cx="6.1" cy="5" r="0.8" fill="#10e8f8"/><path d="M3.8 3.6 H8.4" stroke="#f09040" stroke-width="0.6"/></svg><svg class="a" style="left:19.0px;top:35.0px" width="9" height="8.5" viewBox="0 0 9 8.5"><path d="M0.5 4.5 L2.5 7 M2.5 4.5 L0.5 7" stroke="#f01010" stroke-width="1"/><path d="M3.8 1.4 H8.4 L6.6 4.2 V6.8 H5.6 V4.2 Z" fill="#000"/><circle cx="6.1" cy="2.6" r="0.85" fill="#10e8f8"/><path d="M4 1 H8.2" stroke="#f09040" stroke-width="0.7"/></svg><svg class="a" style="left:30.0px;top:35.0px" width="9" height="8.5" viewBox="0 0 9 8.5"><path d="M0.5 7 L2.5 4 L3.5 6 L5.5 3" stroke="#1030e0" fill="none" stroke-width="1.1"/><path d="M3.8 1.4 H8.4 L6.6 4.2 V6.8 H5.6 V4.2 Z" fill="#000"/><circle cx="6.1" cy="2.6" r="0.85" fill="#10e8f8"/><path d="M4 1 H8.2" stroke="#f09040" stroke-width="0.7"/></svg><svg class="a" style="left:41.0px;top:35.0px" width="9" height="8.5" viewBox="0 0 9 8.5"><path d="M1 1 Q4 3 3 7" stroke="#e0d000" fill="none" stroke-width="1"/><path d="M1 2 Q3 4 2.5 7" stroke="#1030e0" fill="none" stroke-width="0.9"/><path d="M3.8 1.4 H8.4 L6.6 4.2 V6.8 H5.6 V4.2 Z" fill="#000"/><circle cx="6.1" cy="2.6" r="0.85" fill="#10e8f8"/><path d="M4 1 H8.2" stroke="#f09040" stroke-width="0.7"/></svg><svg class="a" style="left:51.5px;top:35.0px" width="9" height="8.5" viewBox="0 0 9 8.5"><circle cx="3.5" cy="4.5" r="2.6" fill="none" stroke="#1030e0" stroke-width="1.2"/><path d="M3.8 1.4 H8.4 L6.6 4.2 V6.8 H5.6 V4.2 Z" fill="#000"/><circle cx="6.1" cy="2.6" r="0.85" fill="#10e8f8"/><path d="M4 1 H8.2" stroke="#f09040" stroke-width="0.7"/></svg><svg class="a" style="left:62.0px;top:35.0px" width="9" height="8.5" viewBox="0 0 9 8.5"><ellipse cx="3.5" cy="5" rx="3" ry="2.2" fill="none" stroke="#1030e0" stroke-width="1.2"/><path d="M3.8 1.4 H8.4 L6.6 4.2 V6.8 H5.6 V4.2 Z" fill="#000"/><circle cx="6.1" cy="2.6" r="0.85" fill="#10e8f8"/><path d="M4 1 H8.2" stroke="#f09040" stroke-width="0.7"/></svg><svg class="a" style="left:73.0px;top:35.0px" width="9" height="8.5" viewBox="0 0 9 8.5"><rect x="0.5" y="1" width="7" height="6.5" fill="#f0e000"/><path d="M0.5 1 L7 7.5 M7 1 L0.5 7.5" stroke="#000" stroke-width="1"/><path d="M3.8 1.4 H8.4 L6.6 4.2 V6.8 H5.6 V4.2 Z" fill="#000"/><circle cx="6.1" cy="2.6" r="0.85" fill="#10e8f8"/><path d="M4 1 H8.2" stroke="#f09040" stroke-width="0.7"/></svg><svg class="a" style="left:84.0px;top:35.0px" width="9" height="8.5" viewBox="0 0 9 8.5"><rect x="0.5" y="1.5" width="7" height="6" fill="#000"/><rect x="1.5" y="3" width="5" height="3" fill="#f0e000"/><path d="M3.8 1.4 H8.4 L6.6 4.2 V6.8 H5.6 V4.2 Z" fill="#000"/><circle cx="6.1" cy="2.6" r="0.85" fill="#10e8f8"/><path d="M4 1 H8.2" stroke="#f09040" stroke-width="0.7"/></svg><svg class="a" style="left:95.0px;top:35.0px" width="9" height="8.5" viewBox="0 0 9 8.5"><path d="M0.5 4 L3 1.5 L5.5 4 L3 7 Z" fill="#40d040" stroke="#000" stroke-width="0.9"/><circle cx="3" cy="5" r="1" fill="#e040a0"/><path d="M3.8 1.4 H8.4 L6.6 4.2 V6.8 H5.6 V4.2 Z" fill="#000"/><circle cx="6.1" cy="2.6" r="0.85" fill="#10e8f8"/><path d="M4 1 H8.2" stroke="#f09040" stroke-width="0.7"/></svg><svg class="a" style="left:106.0px;top:35.0px" width="9" height="8.5" viewBox="0 0 9 8.5"><path d="M1 2 V7 H5" stroke="#1030e0" fill="none" stroke-width="1.2"/><path d="M3.8 1.4 H8.4 L6.6 4.2 V6.8 H5.6 V4.2 Z" fill="#000"/><circle cx="6.1" cy="2.6" r="0.85" fill="#10e8f8"/><path d="M4 1 H8.2" stroke="#f09040" stroke-width="0.7"/></svg><svg class="a" style="left:117.0px;top:35.0px" width="9" height="8.5" viewBox="0 0 9 8.5"><rect x="0.5" y="4.5" width="5" height="3" fill="#f0e000" stroke="#000" stroke-width="0.9"/><path d="M3.8 1.4 H8.4 L6.6 4.2 V6.8 H5.6 V4.2 Z" fill="#000"/><circle cx="6.1" cy="2.6" r="0.85" fill="#10e8f8"/><path d="M4 1 H8.2" stroke="#f09040" stroke-width="0.7"/></svg><svg class="a" style="left:128.0px;top:35.0px" width="9" height="8.5" viewBox="0 0 9 8.5"><path d="M1 7 V4 H3 L4.5 2" stroke="#1030e0" fill="none" stroke-width="1.1"/><path d="M3.8 1.4 H8.4 L6.6 4.2 V6.8 H5.6 V4.2 Z" fill="#000"/><circle cx="6.1" cy="2.6" r="0.85" fill="#10e8f8"/><path d="M4 1 H8.2" stroke="#f09040" stroke-width="0.7"/></svg><svg class="a" style="left:139.0px;top:35.0px" width="9" height="8.5" viewBox="0 0 9 8.5"><path d="M0.5 7.5 L2 6 M3 5 L4.5 3.5" stroke="#1030e0" fill="none" stroke-width="1.1"/><path d="M3.8 1.4 H8.4 L6.6 4.2 V6.8 H5.6 V4.2 Z" fill="#000"/><circle cx="6.1" cy="2.6" r="0.85" fill="#10e8f8"/><path d="M4 1 H8.2" stroke="#f09040" stroke-width="0.7"/></svg><svg class="a" style="left:150.0px;top:35.0px" width="9" height="8.5" viewBox="0 0 9 8.5"><rect x="0.5" y="2" width="5" height="5" fill="none" stroke="#000" stroke-width="1"/><path d="M1.5 6 L3 4" stroke="#e0d000"/><rect x="3" y="6" width="2" height="1.5" fill="#f020f0"/><path d="M3.8 1.4 H8.4 L6.6 4.2 V6.8 H5.6 V4.2 Z" fill="#000"/><circle cx="6.1" cy="2.6" r="0.85" fill="#10e8f8"/><path d="M4 1 H8.2" stroke="#f09040" stroke-width="0.7"/></svg><svg class="a" style="left:161.0px;top:35.0px" width="9" height="8.5" viewBox="0 0 9 8.5"><path d="M0.5 6.5 H6 M1.5 5 L3 6.5" stroke="#1030e0" fill="none" stroke-width="1"/><path d="M3.8 1.4 H8.4 L6.6 4.2 V6.8 H5.6 V4.2 Z" fill="#000"/><circle cx="6.1" cy="2.6" r="0.85" fill="#10e8f8"/><path d="M4 1 H8.2" stroke="#f09040" stroke-width="0.7"/></svg><svg class="a" style="left:172.0px;top:35.0px" width="9" height="8.5" viewBox="0 0 9 8.5"><circle cx="4" cy="4" r="3.3" fill="#1040e0"/><rect x="2" y="2" width="4" height="4" fill="#f02020"/><rect x="3" y="3" width="2" height="3" fill="#f0e000"/><path d="M6 1 V7" stroke="#10c010"/></svg><svg class="a" style="left:182.0px;top:35.0px" width="9" height="8.5" viewBox="0 0 9 8.5"><path d="M1 3 L4 1.5 L8 2.5 L7 6 L3 7.5 L1 6 Z" fill="#fff" stroke="#000" stroke-width="1"/><path d="M1 5 L7 4" stroke="#10c010" stroke-width="1"/><path d="M5 1 L7 0.5" stroke="#000"/></svg><svg class="a" style="left:200.0px;top:35.0px" width="9" height="8.5" viewBox="0 0 9 8.5"><circle cx="4.5" cy="3" r="2.5" fill="#ddd" stroke="#777" stroke-width="0.9"/><path d="M4.5 5.5 V8 M2 1 L1 4" stroke="#777" stroke-width="1"/></svg><svg class="a" style="left:211.0px;top:35.0px" width="9" height="8.5" viewBox="0 0 9 8.5"><rect x="0.5" y="0.5" width="2.5" height="7" fill="#00d8e8"/><path d="M1.5 0.5 V7.5" stroke="#666" stroke-width="0.6"/><circle cx="5.8" cy="4.3" r="1.8" fill="#f0e000" stroke="#000" stroke-width="0.9"/><path d="M5.8 6 V8" stroke="#000" stroke-width="1.1"/></svg><svg class="a" style="left:222.0px;top:35.0px" width="9" height="8.5" viewBox="0 0 9 8.5"><path d="M0.5 1 L2.5 3 M2.5 1 L0.5 3" stroke="#f01010" stroke-width="0.9"/><circle cx="5.5" cy="4.3" r="1.8" fill="#f0e000" stroke="#000" stroke-width="0.9"/><path d="M5.5 6 V8" stroke="#000" stroke-width="1.1"/></svg><svg class="a" style="left:233.0px;top:35.0px" width="9" height="8.5" viewBox="0 0 9 8.5"><circle cx="3.5" cy="3.5" r="3" fill="none" stroke="#1040e0" stroke-width="1.1"/><rect x="2" y="2.5" width="2.5" height="3" fill="#f02020"/><circle cx="5.8" cy="4.3" r="1.8" fill="#f0e000" stroke="#000" stroke-width="0.9"/><path d="M5.8 6 V8" stroke="#000" stroke-width="1.1"/></svg><svg class="a" style="left:244.0px;top:35.0px" width="9" height="8.5" viewBox="0 0 9 8.5"><path d="M1 1 V7 M2.5 1 V7" stroke="#999" stroke-width="0.8"/><circle cx="5.5" cy="4" r="1.7" fill="#eee" stroke="#777" stroke-width="0.9"/><path d="M5.5 5.5 V8 M4 3 L3 4" stroke="#777" stroke-width="1"/></svg><svg class="a" style="left:255.0px;top:35.0px" width="9" height="8.5" viewBox="0 0 9 8.5"><path d="M1 1 V7 M2.5 1 V7" stroke="#999" stroke-width="0.8"/><circle cx="5.5" cy="4" r="1.7" fill="#eee" stroke="#777" stroke-width="0.9"/><path d="M5.5 5.5 V8 M4 3 L3 4" stroke="#777" stroke-width="1"/></svg><svg class="a" style="left:271.0px;top:35.0px" width="9" height="8.5" viewBox="0 0 9 8.5"><circle cx="4.5" cy="3" r="2.5" fill="#ddd" stroke="#777" stroke-width="0.9"/><path d="M4.5 5.5 V8 M2 1 L1 4" stroke="#777" stroke-width="1"/></svg><svg class="a" style="left:281.5px;top:35.0px" width="9" height="8.5" viewBox="0 0 9 8.5"><rect x="0.5" y="0.5" width="2.5" height="7" fill="#00d8e8"/><circle cx="5.8" cy="4" r="1.8" fill="#fff" stroke="#000" stroke-width="1"/><path d="M5.8 5.5 V8" stroke="#000" stroke-width="1.1"/></svg><svg class="a" style="left:292.0px;top:35.0px" width="9" height="8.5" viewBox="0 0 9 8.5"><path d="M0.5 1 L2.5 3 M2.5 1 L0.5 3" stroke="#f01010" stroke-width="0.9"/><circle cx="5.5" cy="4" r="1.8" fill="#fff" stroke="#000" stroke-width="1"/><path d="M5.5 5.5 V8" stroke="#000" stroke-width="1.1"/></svg><svg class="a" style="left:303.0px;top:35.0px" width="9" height="8.5" viewBox="0 0 9 8.5"><circle cx="3.5" cy="3.5" r="3" fill="none" stroke="#1040e0" stroke-width="1.1"/><rect x="2" y="2.5" width="2.5" height="3" fill="#f02020"/><circle cx="5.8" cy="4" r="1.8" fill="#fff" stroke="#000" stroke-width="1"/><path d="M5.8 5.5 V8" stroke="#000" stroke-width="1.1"/></svg><svg class="a" style="left:313.0px;top:35.0px" width="9" height="8.5" viewBox="0 0 9 8.5"><path d="M1 1 V7 M2.5 1 V7" stroke="#999" stroke-width="0.8"/><circle cx="5.5" cy="4" r="1.7" fill="#eee" stroke="#777" stroke-width="0.9"/><path d="M5.5 5.5 V8 M4 3 L3 4" stroke="#777" stroke-width="1"/></svg><svg class="a" style="left:324.0px;top:35.0px" width="9" height="8.5" viewBox="0 0 9 8.5"><path d="M1 1 V7 M2.5 1 V7" stroke="#999" stroke-width="0.8"/><circle cx="5.5" cy="4" r="1.7" fill="#eee" stroke="#777" stroke-width="0.9"/><path d="M5.5 5.5 V8 M4 3 L3 4" stroke="#777" stroke-width="1"/></svg><svg class="a" style="left:335.0px;top:35.0px" width="9" height="8.5" viewBox="0 0 9 8.5"><rect x="0.5" y="2.5" width="3" height="3" fill="#fff" stroke="#000" stroke-width="1"/><circle cx="6" cy="4" r="1.7" fill="#fff" stroke="#000" stroke-width="1"/><path d="M6 5.5 V8" stroke="#000" stroke-width="1.1"/></svg><svg class="a" style="left:354.0px;top:35.0px" width="9" height="8.5" viewBox="0 0 9 8.5"><rect x="0.8" y="0.8" width="5" height="5" fill="none" stroke="#000" stroke-width="1"/><rect x="2.8" y="2.8" width="5" height="5" fill="#fff" stroke="#000" stroke-width="1"/><rect x="4" y="4" width="2.5" height="2.5" fill="none" stroke="#000" stroke-width="0.8"/></svg><svg class="a" style="left:364.0px;top:35.0px" width="9" height="8.5" viewBox="0 0 9 8.5"><path d="M0.8 2.5 L3 0.8 H8 V6 L6 7.5 H0.8 Z" fill="#00d8e8" stroke="#000" stroke-width="1"/><path d="M0.8 2.5 H6 V7.5 M6 2.5 L8 0.8" stroke="#000" fill="none" stroke-width="0.8"/></svg><svg class="a" style="left:375.0px;top:35.0px" width="9" height="8.5" viewBox="0 0 9 8.5"><path d="M0.8 2 L3 0.5 L8 3 V7 L5 7.5 L0.8 5 Z" fill="#00c8d8"/><path d="M0.8 2 L5 4 L8 3 M5 4 V7.5" stroke="#006870" fill="none" stroke-width="0.8"/></svg><svg class="a" style="left:385.0px;top:35.0px" width="9" height="8.5" viewBox="0 0 9 8.5"><path d="M1 3 L3.5 0.8 L6.5 2 L8 5 L6 7.5 L2.5 7 Z" fill="#00d8e8" stroke="#000" stroke-width="1"/><path d="M1 3 L4 4 L6.5 2 M4 4 L6 7.5" stroke="#000" fill="none" stroke-width="0.7"/></svg><svg class="a" style="left:396.5px;top:35.0px" width="9" height="8.5" viewBox="0 0 9 8.5"><path d="M1 2 L4 0.8 L8 2 L6 6.5 L4 7.8 L2.5 6 Z" fill="#888" stroke="#555" stroke-width="0.8"/></svg><svg class="a" style="left:407.5px;top:35.0px" width="9" height="8.5" viewBox="0 0 9 8.5"><rect x="0.8" y="1.5" width="7.5" height="5" fill="#fff" stroke="#000" stroke-width="1.1"/><path d="M2 3.5 H7 M2 5 H5" stroke="#f01010" stroke-width="0.9"/></svg><svg class="a" style="left:419.0px;top:35.0px" width="9" height="8.5" viewBox="0 0 9 8.5"><path d="M1 7 L7 1" stroke="#00c8e8" stroke-width="1.3"/><path d="M1 1 V3 M7 5 V7 M5 7 H7" stroke="#f01010" stroke-width="1"/><path d="M2 5 H4" stroke="#1030e0" stroke-width="1"/></svg><svg class="a" style="left:436.0px;top:35.0px" width="9" height="8.5" viewBox="0 0 9 8.5"><path d="M1 1 L6 6.5" stroke="#1030e0" stroke-width="1.4"/><path d="M2 2 L7 7.5" stroke="#00d8e8" stroke-width="0.8"/><path d="M5.5 1 L7 3" stroke="#000" stroke-width="1"/><path d="M1 0.5 L3 1" stroke="#000" stroke-width="1"/></svg><svg class="a" style="left:451.5px;top:35.0px" width="9" height="8.5" viewBox="0 0 9 8.5"><circle cx="3.5" cy="3.5" r="2.7" fill="#fff" stroke="#000" stroke-width="1.1"/><path d="M5.5 5.5 L8 8" stroke="#1030e0" stroke-width="1.6"/><path d="M2 3.5 H5 M3.5 2 V5" stroke="#000" stroke-width="0.8"/></svg><svg class="a" style="left:462.0px;top:35.0px" width="9" height="8.5" viewBox="0 0 9 8.5"><circle cx="3.5" cy="3.5" r="2.7" fill="#fff" stroke="#000" stroke-width="1.1"/><path d="M5.5 5.5 L8 8" stroke="#1030e0" stroke-width="1.6"/><path d="M2 3.5 H5 M3.5 2 V5" stroke="#000" stroke-width="0.8"/></svg><svg class="a" style="left:473.0px;top:35.0px" width="9" height="8.5" viewBox="0 0 9 8.5"><circle cx="3.5" cy="3.5" r="2.7" fill="#fff" stroke="#000" stroke-width="1.1"/><path d="M5.5 5.5 L8 8" stroke="#1030e0" stroke-width="1.6"/><path d="M7 1 V3.5" stroke="#000" stroke-width="0.9"/></svg><svg class="a" style="left:484.5px;top:35.0px" width="9" height="8.5" viewBox="0 0 9 8.5"><circle cx="3.5" cy="3.5" r="2.7" fill="#fff" stroke="#999" stroke-width="1"/><path d="M5.5 5.5 L8 8" stroke="#999" stroke-width="1.4"/><path d="M2 3.5 H5" stroke="#999" stroke-width="0.8"/></svg><svg class="a" style="left:495.0px;top:35.0px" width="9" height="8.5" viewBox="0 0 9 8.5"><path d="M1.5 3.5 A3 3 0 0 1 7 3 M7 5 A3 3 0 0 1 1.5 5.5" stroke="#000" fill="none" stroke-width="1.3"/><path d="M6 1.5 L7.5 3.5 L5 3.5Z M2.5 7 L1 5 L3.5 5Z" fill="#000"/></svg><svg class="a" style="left:506.0px;top:35.0px" width="9" height="8.5" viewBox="0 0 9 8.5"><path d="M4.2 0.5 V8 M0.5 4.2 H8" stroke="#000" stroke-width="1.3"/><path d="M4.2 0 L2.5 2 H6 Z M4.2 8.5 L2.5 6.5 H6Z M0 4.2 L2 2.5 V6Z M8.5 4.2 L6.5 2.5 V6Z" fill="#000"/></svg>
<div class="a" style="left:0;top:45px;width:700px;height:2px;background:#fcfcfc"></div>
<div class="a" id="view"></div>
<svg class="a" style="left:116px;top:47px" width="583" height="467" viewBox="116 47 583 467"><g stroke="#a8a8a8" stroke-width="1.1" stroke-dasharray="1.4 2.6" fill="none"><line x1="118.8" y1="296.5" x2="700" y2="243.2" stroke-dasharray="1.2 2.8" stroke="#a0a0a0"/><line x1="546" y1="228.3" x2="700" y2="255"/><line x1="650.4" y1="84.8" x2="650.4" y2="441" stroke-dasharray="1.3 2.7"/></g><g fill="none" stroke="#00e8fc" stroke-width="1.2" stroke-linejoin="round"><path d="M148.6 268.6 C163.4 267.2 211.8 262.6 237.4 260.2 C263.0 257.8 281.3 256.4 302.4 254.4 C323.5 252.5 346.6 250.1 363.9 248.5 C381.2 246.9 384.6 246.5 406.2 244.7 C427.8 242.9 469.4 239.3 493.2 237.5 C517.0 235.7 530.1 235.1 548.7 233.9 C567.3 232.7 587.7 231.2 604.7 230.3 C621.7 229.4 643.1 228.7 650.8 228.4"/><path d="M148.6 312.9 C149.8 313.1 153.4 313.8 156.0 314.3 C158.6 314.8 161.3 315.6 163.9 316.0 C166.5 316.4 165.7 316.5 171.7 316.9 C177.7 317.3 185.2 318.1 200.0 318.6 C214.8 319.1 243.7 319.8 260.4 320.1 C277.1 320.4 289.1 320.6 300.0 320.6 C310.9 320.6 311.1 320.4 325.6 319.9 C340.1 319.4 369.9 318.5 387.1 317.6 C404.3 316.7 413.3 315.6 428.8 314.3 C444.3 313.1 466.0 311.4 480.0 310.1 C494.0 308.8 499.1 308.4 512.9 306.7 C526.7 305.0 546.5 302.2 563.0 300.0 C579.5 297.8 600.7 295.0 612.0 293.4 C623.3 291.8 627.8 290.7 630.9 290.1"/><path d="M148.6 268.6 C148.6 276.0 148.6 305.5 148.6 312.9"/><path d="M237.4 260.2 C237.4 265.5 237.5 284.6 237.5 292.0 C237.5 299.4 237.1 301.5 237.5 304.3 C237.9 307.1 239.1 307.6 240.0 309.0 C240.9 310.4 241.7 311.3 243.0 312.5 C244.3 313.7 246.5 315.0 248.0 316.0 C249.5 317.0 250.5 317.9 252.0 318.5 C253.5 319.1 255.6 319.5 257.0 319.8 C258.4 320.1 259.8 320.1 260.4 320.1"/><path d="M302.4 254.4 C302.4 259.7 302.5 278.7 302.5 286.0 C302.5 293.3 302.3 295.2 302.6 298.2 C302.9 301.2 303.7 302.1 304.5 304.0 C305.3 305.9 306.4 307.9 307.5 309.6 C308.6 311.3 309.7 312.7 311.0 314.0 C312.3 315.3 313.8 316.7 315.3 317.6 C316.8 318.5 318.3 318.9 320.0 319.3 C321.7 319.7 324.7 319.8 325.6 319.9"/><path d="M363.9 248.5 C363.9 253.8 364.0 272.7 364.0 280.0 C364.0 287.3 363.8 289.1 364.0 292.3 C364.2 295.5 364.8 296.9 365.5 299.0 C366.2 301.1 367.0 303.3 368.1 305.2 C369.2 307.1 370.6 308.9 372.0 310.5 C373.4 312.1 375.2 313.5 376.7 314.5 C378.2 315.5 379.3 316.1 381.0 316.6 C382.7 317.1 386.1 317.4 387.1 317.6"/><path d="M406.2 244.7 C406.2 249.9 406.3 268.9 406.3 276.0 C406.3 283.1 406.1 284.5 406.3 287.5 C406.6 290.5 407.1 291.8 407.8 294.0 C408.5 296.2 409.4 298.6 410.4 300.7 C411.4 302.8 412.7 304.8 414.0 306.5 C415.3 308.2 416.9 309.9 418.4 311.0 C419.9 312.1 421.3 312.8 423.0 313.3 C424.7 313.9 427.8 314.1 428.8 314.3"/><path d="M493.2 237.5 C493.5 239.2 494.6 243.9 494.8 248.0 C495.0 252.1 494.6 257.5 494.6 262.0 C494.6 266.5 494.6 270.7 494.8 275.0 C495.0 279.3 495.2 284.3 495.8 288.0 C496.4 291.7 497.3 294.6 498.5 297.0 C499.7 299.4 501.4 301.1 503.0 302.5 C504.6 303.9 506.4 304.6 508.0 305.3 C509.6 306.0 512.1 306.5 512.9 306.7"/><path d="M548.7 233.9 C549.0 235.9 550.2 242.0 550.6 246.0 C551.0 250.0 550.8 254.0 550.8 258.0 C550.8 262.0 550.4 266.0 550.5 270.0 C550.6 274.0 550.8 278.5 551.3 282.0 C551.8 285.5 552.5 288.6 553.5 291.0 C554.5 293.4 555.4 295.0 557.0 296.5 C558.6 298.0 562.0 299.4 563.0 300.0"/><path d="M604.7 230.3 C605.1 232.2 606.8 238.4 607.2 242.0 C607.6 245.6 607.5 248.4 607.3 252.0 C607.1 255.6 606.5 259.8 606.2 263.5 C605.9 267.2 605.6 270.6 605.6 274.0 C605.6 277.4 605.8 281.3 606.3 284.0 C606.8 286.7 607.5 288.4 608.5 290.0 C609.5 291.6 611.4 292.8 612.0 293.4"/><path d="M650.8 228.4 C650.2 229.8 648.5 234.2 647.5 237.0 C646.5 239.8 645.7 242.7 644.9 245.2 C644.1 247.7 643.0 249.9 642.6 252.0 C642.2 254.1 641.8 256.2 642.3 258.0 C642.8 259.8 644.0 261.1 645.5 262.5 C647.0 263.9 649.4 265.0 651.0 266.5 C652.6 268.0 654.3 269.8 655.0 271.5 C655.7 273.2 655.8 275.2 655.2 277.0 C654.6 278.8 653.2 280.5 651.5 282.0 C649.8 283.5 647.2 284.8 645.0 285.8 C642.8 286.9 640.4 287.6 638.0 288.3 C635.6 289.0 632.1 289.8 630.9 290.1"/></g><g stroke="#d8661c" stroke-width="1"><line x1="643.9" y1="261.4" x2="666.9" y2="272.5"/><line x1="632.3" y1="290.7" x2="660.6" y2="286.5"/></g><g fill="#ffe600"><rect x="147.5" y="267.5" width="2.2" height="2.2"/><rect x="147.5" y="282.8" width="2.2" height="2.2"/><rect x="147.5" y="299.2" width="2.2" height="2.2"/><rect x="147.5" y="311.8" width="2.2" height="2.2"/><rect x="154.9" y="313.2" width="2.2" height="2.2"/><rect x="162.8" y="314.9" width="2.2" height="2.2"/><rect x="170.6" y="315.8" width="2.2" height="2.2"/><rect x="236.3" y="259.1" width="2.2" height="2.2"/><rect x="236.5" y="274.9" width="2.2" height="2.2"/><rect x="236.5" y="291.2" width="2.2" height="2.2"/><rect x="236.3" y="303.6" width="2.2" height="2.2"/><rect x="241.8" y="311.3" width="2.2" height="2.2"/><rect x="250.4" y="317.5" width="2.2" height="2.2"/><rect x="259.3" y="319.0" width="2.2" height="2.2"/><rect x="301.3" y="253.3" width="2.2" height="2.2"/><rect x="301.3" y="268.9" width="2.2" height="2.2"/><rect x="301.3" y="285.1" width="2.2" height="2.2"/><rect x="301.5" y="297.1" width="2.2" height="2.2"/><rect x="306.4" y="308.5" width="2.2" height="2.2"/><rect x="314.2" y="316.5" width="2.2" height="2.2"/><rect x="324.5" y="318.8" width="2.2" height="2.2"/><rect x="362.8" y="247.4" width="2.2" height="2.2"/><rect x="362.9" y="262.8" width="2.2" height="2.2"/><rect x="362.9" y="278.8" width="2.2" height="2.2"/><rect x="362.9" y="291.2" width="2.2" height="2.2"/><rect x="367.0" y="304.1" width="2.2" height="2.2"/><rect x="375.6" y="314.0" width="2.2" height="2.2"/><rect x="386.0" y="316.5" width="2.2" height="2.2"/><rect x="405.1" y="243.6" width="2.2" height="2.2"/><rect x="405.2" y="258.3" width="2.2" height="2.2"/><rect x="405.2" y="274.5" width="2.2" height="2.2"/><rect x="405.2" y="286.4" width="2.2" height="2.2"/><rect x="409.3" y="299.6" width="2.2" height="2.2"/><rect x="417.3" y="311.1" width="2.2" height="2.2"/><rect x="427.7" y="313.2" width="2.2" height="2.2"/><rect x="492.1" y="236.4" width="2.2" height="2.2"/><rect x="495.6" y="248.4" width="2.2" height="2.2"/><rect x="493.1" y="261.8" width="2.2" height="2.2"/><rect x="494.0" y="289.4" width="2.2" height="2.2"/><rect x="501.3" y="302.3" width="2.2" height="2.2"/><rect x="511.8" y="305.6" width="2.2" height="2.2"/><rect x="547.6" y="232.8" width="2.2" height="2.2"/><rect x="552.7" y="243.7" width="2.2" height="2.2"/><rect x="550.2" y="255.1" width="2.2" height="2.2"/><rect x="547.9" y="282.1" width="2.2" height="2.2"/><rect x="554.0" y="295.7" width="2.2" height="2.2"/><rect x="561.9" y="298.9" width="2.2" height="2.2"/><rect x="603.6" y="229.2" width="2.2" height="2.2"/><rect x="607.5" y="241.8" width="2.2" height="2.2"/><rect x="606.7" y="254.6" width="2.2" height="2.2"/><rect x="602.9" y="276.0" width="2.2" height="2.2"/><rect x="607.1" y="289.6" width="2.2" height="2.2"/><rect x="610.9" y="292.3" width="2.2" height="2.2"/><rect x="649.7" y="227.3" width="2.2" height="2.2"/><rect x="643.8" y="244.1" width="2.2" height="2.2"/><rect x="637.9" y="257.7" width="2.2" height="2.2"/><rect x="665.8" y="271.4" width="2.2" height="2.2"/><rect x="629.8" y="289.0" width="2.2" height="2.2"/></g><g fill="#18c818"><rect x="494.0" y="274.2" width="2" height="2"/><rect x="549.0" y="267.6" width="2" height="2"/><rect x="605.1" y="262.5" width="2" height="2"/><rect x="642.9" y="260.4" width="2" height="2"/><rect x="649.1" y="287.0" width="2" height="2"/></g><g stroke="#fff" stroke-width="1.1" fill="none"><path d="M650.2 79.5 H655 L650.2 84 H655.2"/><path d="M539.2 228 L541.3 230.8 L543.5 228 M541.3 230.8 V233.5"/><path d="M115.5 299 L120.8 304 M120.8 299 L115.5 304"/></g></svg>
<div class="a" style="left:0;top:46px;width:116px;height:469px;background:#f0f0f0"></div>
<div class="a" style="left:113px;top:46px;width:3px;height:469px;background:#fafafa"></div>
<div class="cap" style="top:46px"></div>
<div class="capl" style="top:56px"></div>
<div class="t" style="left:2px;top:46.5px;color:#1a2230;transform:scaleX(0.87);transform-origin:0 0;-webkit-text-stroke:0.25px #000">Entities</div>
<svg class="a" style="left:105px;top:46px" width="8" height="9"><path d="M1.5 2.5 L6.5 7 M6.5 2.5 L1.5 7" stroke="#000" stroke-width="1.4"/></svg>
<div class="cap" style="top:267px"></div>
<div class="capl" style="top:277px"></div>
<div class="t" style="left:2px;top:267.5px;color:#1a2230;transform:scaleX(0.87);transform-origin:0 0;-webkit-text-stroke:0.25px #000">Properties</div>
<svg class="a" style="left:105px;top:267px" width="8" height="9"><path d="M1.5 2.5 L6.5 7 M6.5 2.5 L1.5 7" stroke="#000" stroke-width="1.4"/></svg>
<div class="cap" style="top:422px"></div>
<div class="capl" style="top:432px"></div>
<div class="t" style="left:2px;top:422.5px;color:#1a2230;transform:scaleX(0.87);transform-origin:0 0;-webkit-text-stroke:0.25px #000">Selection Set</div>
<svg class="a" style="left:105px;top:422px" width="8" height="9"><path d="M1.5 2.5 L6.5 7 M6.5 2.5 L1.5 7" stroke="#000" stroke-width="1.4"/></svg>
<div class="a" style="left:0;top:56px;width:1px;height:208px;background:#6a6a6a"></div>
<div class="a" style="left:3px;top:58.5px;width:26px;height:10px;background:#fbfbfb;border:1px solid #c8c8c8;border-bottom:none"></div>
<div class="t" style="left:8px;top:59.6px;font-size:7px;transform:scaleX(0.79);transform-origin:0 0;-webkit-text-stroke:0.4px #000">Parents</div>
<div class="a" style="left:29px;top:59px;width:24px;height:9.5px;background:#ececec;border:1px solid #5a6275;border-bottom:none"></div>
<div class="t" style="left:31.6px;top:60.6px;font-size:7px;transform:scaleX(0.76);transform-origin:0 0;-webkit-text-stroke:0.4px #000">Children</div>
<div class="a" style="left:1px;top:68px;width:101.5px;height:196px;background:#fff"></div>
<div class="a" style="left:7px;top:68px;width:1px;height:196px;background:#d4d4d4"></div>
<div class="a" style="left:16px;top:68px;width:1px;height:196px;background:#9c9c9c"></div>
<div class="a" style="left:102.5px;top:68px;width:7px;height:196px;background:#eaeaea;border-left:1px solid #f8f8f8"></div>
<div class="a" style="left:101.5px;top:122px;width:8px;height:77px;border:1px solid #9a9a9a;border-radius:1.5px;background:linear-gradient(90deg,#f2f2f2,#dadada)"></div>
<div class="a" style="left:104px;top:158.5px;width:3px;height:4px;border-top:1px solid #777;border-bottom:1px solid #777;background:#bbb"></div>
<svg class="a" style="left:103px;top:71px" width="6" height="4"><path d="M0.5 3.5 L3 0.5 L5.5 3.5Z" fill="#222"/></svg>
<svg class="a" style="left:103px;top:259px" width="6" height="4"><path d="M0.5 0.5 L3 3.5 L5.5 0.5Z" fill="#222"/></svg>
<div class="a" style="left:111.5px;top:58px;width:1px;height:206px;background:#d8d8d8"></div>
<svg class="a" style="left:24.8px;top:70.70px" width="4" height="5"><path d="M0.6 0.5 L3.1 2.5 L0.6 4.5Z" fill="none" stroke="#6a6a6a" stroke-width="0.9"/></svg>
<div class="a" style="left:29.5px;top:73.20px;width:1px;height:1px;background:#aaa"></div>
<svg class="a" style="left:31.9px;top:69.50px" width="7.1" height="6.4"><rect x="0" y="0" width="7.1" height="6.4" fill="#fff500"/><path d="M0.4 5.9 L2.3 2.1 L4.4 4.1 L5.6 1.6 L6.6 0.8" fill="none" stroke="#000" stroke-width="0.95"/><circle cx="2" cy="2.9" r="0.8" fill="#1030e0"/><circle cx="4.4" cy="4" r="0.8" fill="#1030e0"/></svg>
<div class="t tr" style="left:41.7px;top:68.87px">mc3_side</div>
<svg class="a" style="left:24.8px;top:78.67px" width="4" height="5"><path d="M0.6 0.5 L3.1 2.5 L0.6 4.5Z" fill="none" stroke="#6a6a6a" stroke-width="0.9"/></svg>
<div class="a" style="left:29.5px;top:81.17px;width:1px;height:1px;background:#aaa"></div>
<svg class="a" style="left:31.9px;top:77.47px" width="7.1" height="6.4"><rect x="0" y="0" width="7.1" height="6.4" fill="#fff500"/><path d="M0.4 5.9 L2.3 2.1 L4.4 4.1 L5.6 1.6 L6.6 0.8" fill="none" stroke="#000" stroke-width="0.95"/><circle cx="2" cy="2.9" r="0.8" fill="#1030e0"/><circle cx="4.4" cy="4" r="0.8" fill="#1030e0"/></svg>
<div class="t tr" style="left:41.7px;top:76.84px">mc4_side</div>
<svg class="a" style="left:24.8px;top:86.64px" width="4" height="5"><path d="M0.6 0.5 L3.1 2.5 L0.6 4.5Z" fill="none" stroke="#6a6a6a" stroke-width="0.9"/></svg>
<div class="a" style="left:29.5px;top:89.14px;width:1px;height:1px;background:#aaa"></div>
<svg class="a" style="left:31.9px;top:85.44px" width="7.1" height="6.4"><rect x="0" y="0" width="7.1" height="6.4" fill="#fff500"/><path d="M0.4 5.9 L2.3 2.1 L4.4 4.1 L5.6 1.6 L6.6 0.8" fill="none" stroke="#000" stroke-width="0.95"/><circle cx="2" cy="2.9" r="0.8" fill="#1030e0"/><circle cx="4.4" cy="4" r="0.8" fill="#1030e0"/></svg>
<div class="t tr" style="left:41.7px;top:84.81px">mc5_side</div>
<svg class="a" style="left:24.8px;top:94.61px" width="4" height="5"><path d="M0.6 0.5 L3.1 2.5 L0.6 4.5Z" fill="none" stroke="#6a6a6a" stroke-width="0.9"/></svg>
<div class="a" style="left:29.5px;top:97.11px;width:1px;height:1px;background:#aaa"></div>
<svg class="a" style="left:31.9px;top:93.41px" width="7.1" height="6.4"><rect x="0" y="0" width="7.1" height="6.4" fill="#fff500"/><path d="M0.4 5.9 L2.3 2.1 L4.4 4.1 L5.6 1.6 L6.6 0.8" fill="none" stroke="#000" stroke-width="0.95"/><circle cx="2" cy="2.9" r="0.8" fill="#1030e0"/><circle cx="4.4" cy="4" r="0.8" fill="#1030e0"/></svg>
<div class="t tr" style="left:41.7px;top:92.78px">mc6_side</div>
<svg class="a" style="left:24.8px;top:102.58px" width="4" height="5"><path d="M0.6 0.5 L3.1 2.5 L0.6 4.5Z" fill="none" stroke="#6a6a6a" stroke-width="0.9"/></svg>
<div class="a" style="left:29.5px;top:105.08px;width:1px;height:1px;background:#aaa"></div>
<svg class="a" style="left:31.9px;top:101.38px" width="7.1" height="6.4"><rect x="0" y="0" width="7.1" height="6.4" fill="#fff500"/><path d="M0.4 5.9 L2.3 2.1 L4.4 4.1 L5.6 1.6 L6.6 0.8" fill="none" stroke="#000" stroke-width="0.95"/><circle cx="2" cy="2.9" r="0.8" fill="#1030e0"/><circle cx="4.4" cy="4" r="0.8" fill="#1030e0"/></svg>
<div class="t tr" style="left:41.7px;top:100.75px">mc7_side</div>
<svg class="a" style="left:24.8px;top:110.55px" width="4" height="5"><path d="M0.6 0.5 L3.1 2.5 L0.6 4.5Z" fill="none" stroke="#6a6a6a" stroke-width="0.9"/></svg>
<div class="a" style="left:29.5px;top:113.05px;width:1px;height:1px;background:#aaa"></div>
<svg class="a" style="left:31.9px;top:109.35px" width="7.1" height="6.4"><rect x="0" y="0" width="7.1" height="6.4" fill="#fff500"/><path d="M0.4 5.9 L2.3 2.1 L4.4 4.1 L5.6 1.6 L6.6 0.8" fill="none" stroke="#000" stroke-width="0.95"/><circle cx="2" cy="2.9" r="0.8" fill="#1030e0"/><circle cx="4.4" cy="4" r="0.8" fill="#1030e0"/></svg>
<div class="t tr" style="left:41.7px;top:108.72px">mc8_side</div>
<svg class="a" style="left:24.8px;top:118.52px" width="4" height="5"><path d="M0.6 0.5 L3.1 2.5 L0.6 4.5Z" fill="none" stroke="#6a6a6a" stroke-width="0.9"/></svg>
<div class="a" style="left:29.5px;top:121.02px;width:1px;height:1px;background:#aaa"></div>
<svg class="a" style="left:31.9px;top:117.32px" width="7.1" height="6.4"><rect x="0" y="0" width="7.1" height="6.4" fill="#fff500"/><path d="M0.4 5.9 L2.3 2.1 L4.4 4.1 L5.6 1.6 L6.6 0.8" fill="none" stroke="#000" stroke-width="0.95"/><circle cx="2" cy="2.9" r="0.8" fill="#1030e0"/><circle cx="4.4" cy="4" r="0.8" fill="#1030e0"/></svg>
<div class="t tr" style="left:41.7px;top:116.69px">mc9_bot</div>
<svg class="a" style="left:24.8px;top:126.49px" width="4" height="5"><path d="M0.6 0.5 L3.1 2.5 L0.6 4.5Z" fill="none" stroke="#6a6a6a" stroke-width="0.9"/></svg>
<div class="a" style="left:29.5px;top:128.99px;width:1px;height:1px;background:#aaa"></div>
<svg class="a" style="left:31.9px;top:125.29px" width="7.1" height="6.4"><rect x="0" y="0" width="7.1" height="6.4" fill="#fff500"/><path d="M0.4 5.9 L2.3 2.1 L4.4 4.1 L5.6 1.6 L6.6 0.8" fill="none" stroke="#000" stroke-width="0.95"/><circle cx="2" cy="2.9" r="0.8" fill="#1030e0"/><circle cx="4.4" cy="4" r="0.8" fill="#1030e0"/></svg>
<div class="t tr" style="left:41.7px;top:124.66px">mc9_side</div>
<svg class="a" style="left:24.8px;top:134.46px" width="4" height="5"><path d="M0.6 0.5 L3.1 2.5 L0.6 4.5Z" fill="none" stroke="#6a6a6a" stroke-width="0.9"/></svg>
<div class="a" style="left:29.5px;top:136.96px;width:1px;height:1px;background:#aaa"></div>
<svg class="a" style="left:31.9px;top:133.26px" width="7.1" height="6.4"><rect x="0" y="0" width="7.1" height="6.4" fill="#fff500"/><path d="M0.4 5.9 L2.3 2.1 L4.4 4.1 L5.6 1.6 L6.6 0.8" fill="none" stroke="#000" stroke-width="0.95"/><circle cx="2" cy="2.9" r="0.8" fill="#1030e0"/><circle cx="4.4" cy="4" r="0.8" fill="#1030e0"/></svg>
<div class="t tr" style="left:41.7px;top:132.63px">P</div>
<svg class="a" style="left:24.8px;top:142.43px" width="4" height="5"><path d="M0.6 0.5 L3.1 2.5 L0.6 4.5Z" fill="none" stroke="#6a6a6a" stroke-width="0.9"/></svg>
<div class="a" style="left:29.5px;top:144.93px;width:1px;height:1px;background:#aaa"></div>
<svg class="a" style="left:31.9px;top:141.23px" width="7.1" height="6.4"><rect x="0" y="0" width="7.1" height="6.4" fill="#fff500"/><path d="M0.4 5.9 L2.3 2.1 L4.4 4.1 L5.6 1.6 L6.6 0.8" fill="none" stroke="#000" stroke-width="0.95"/><circle cx="2" cy="2.9" r="0.8" fill="#1030e0"/><circle cx="4.4" cy="4" r="0.8" fill="#1030e0"/></svg>
<div class="t tr" style="left:41.7px;top:140.60px">S</div>
<svg class="a" style="left:24.8px;top:150.40px" width="4" height="5"><path d="M0.6 0.5 L3.1 2.5 L0.6 4.5Z" fill="none" stroke="#6a6a6a" stroke-width="0.9"/></svg>
<div class="a" style="left:29.5px;top:152.90px;width:1px;height:1px;background:#aaa"></div>
<svg class="a" style="left:31.9px;top:149.20px" width="7.1" height="6.4"><rect x="0" y="0" width="7.1" height="6.4" fill="#fff500"/><path d="M0.4 5.9 L2.3 2.1 L4.4 4.1 L5.6 1.6 L6.6 0.8" fill="none" stroke="#000" stroke-width="0.95"/><circle cx="2" cy="2.9" r="0.8" fill="#1030e0"/><circle cx="4.4" cy="4" r="0.8" fill="#1030e0"/></svg>
<div class="t tr" style="left:41.7px;top:148.57px">T</div>
<svg class="a" style="left:24.8px;top:158.37px" width="4" height="5"><path d="M0.6 0.5 L3.1 2.5 L0.6 4.5Z" fill="none" stroke="#6a6a6a" stroke-width="0.9"/></svg>
<div class="a" style="left:29.5px;top:160.87px;width:1px;height:1px;background:#aaa"></div>
<svg class="a" style="left:31.9px;top:157.17px" width="7.1" height="6.4"><rect x="0" y="0" width="7.1" height="6.4" fill="#fff500"/><path d="M0.4 5.9 L2.3 2.1 L4.4 4.1 L5.6 1.6 L6.6 0.8" fill="none" stroke="#000" stroke-width="0.95"/><circle cx="2" cy="2.9" r="0.8" fill="#1030e0"/><circle cx="4.4" cy="4" r="0.8" fill="#1030e0"/></svg>
<div class="t tr" style="left:41.7px;top:156.54px">V</div>
<svg class="a" style="left:24.8px;top:166.34px" width="4" height="5"><path d="M0.6 0.5 L3.1 2.5 L0.6 4.5Z" fill="none" stroke="#6a6a6a" stroke-width="0.9"/></svg>
<div class="a" style="left:29.5px;top:168.84px;width:1px;height:1px;background:#aaa"></div>
<svg class="a" style="left:31.9px;top:165.14px" width="7.1" height="6.4"><rect x="0" y="0" width="7.1" height="6.4" fill="#fff500"/><path d="M0.4 5.9 L2.3 2.1 L4.4 4.1 L5.6 1.6 L6.6 0.8" fill="none" stroke="#000" stroke-width="0.95"/><circle cx="2" cy="2.9" r="0.8" fill="#1030e0"/><circle cx="4.4" cy="4" r="0.8" fill="#1030e0"/></svg>
<div class="t tr" style="left:41.7px;top:164.51px">vl_1</div>
<svg class="a" style="left:24.8px;top:174.31px" width="4" height="5"><path d="M0.6 0.5 L3.1 2.5 L0.6 4.5Z" fill="none" stroke="#6a6a6a" stroke-width="0.9"/></svg>
<div class="a" style="left:29.5px;top:176.81px;width:1px;height:1px;background:#aaa"></div>
<svg class="a" style="left:31.9px;top:173.11px" width="7.1" height="6.4"><rect x="0" y="0" width="7.1" height="6.4" fill="#fff500"/><path d="M0.4 5.9 L2.3 2.1 L4.2 3.6 M4.6 1 Q7 3 5 4.5 Q3.5 5.5 5.5 6.8" fill="none" stroke="#000" stroke-width="0.95"/><circle cx="2" cy="2.9" r="0.8" fill="#1030e0"/><circle cx="4.4" cy="4" r="0.8" fill="#1030e0"/></svg>
<div class="t tr" style="left:41.7px;top:172.48px">vl_2</div>
<svg class="a" style="left:24.8px;top:182.28px" width="4" height="5"><path d="M0.6 0.5 L3.1 2.5 L0.6 4.5Z" fill="none" stroke="#6a6a6a" stroke-width="0.9"/></svg>
<div class="a" style="left:29.5px;top:184.78px;width:1px;height:1px;background:#aaa"></div>
<svg class="a" style="left:31.9px;top:181.08px" width="7.1" height="6.4"><rect x="0" y="0" width="7.1" height="6.4" fill="#fff500"/><path d="M0.4 5.9 L2.3 2.1 L4.2 3.6 M4.6 1 Q7 3 5 4.5 Q3.5 5.5 5.5 6.8" fill="none" stroke="#000" stroke-width="0.95"/><circle cx="2" cy="2.9" r="0.8" fill="#1030e0"/><circle cx="4.4" cy="4" r="0.8" fill="#1030e0"/></svg>
<div class="t tr" style="left:41.7px;top:180.45px">vl_3</div>
<svg class="a" style="left:24.8px;top:190.25px" width="4" height="5"><path d="M0.6 0.5 L3.1 2.5 L0.6 4.5Z" fill="none" stroke="#6a6a6a" stroke-width="0.9"/></svg>
<div class="a" style="left:29.5px;top:192.75px;width:1px;height:1px;background:#aaa"></div>
<svg class="a" style="left:31.9px;top:189.05px" width="7.1" height="6.4"><rect x="0" y="0" width="7.1" height="6.4" fill="#fff500"/><path d="M0.4 5.9 L2.3 2.1 L4.2 3.6 M4.6 1 Q7 3 5 4.5 Q3.5 5.5 5.5 6.8" fill="none" stroke="#000" stroke-width="0.95"/><circle cx="2" cy="2.9" r="0.8" fill="#1030e0"/><circle cx="4.4" cy="4" r="0.8" fill="#1030e0"/></svg>
<div class="t tr" style="left:41.7px;top:188.42px">vl_4</div>
<svg class="a" style="left:24.8px;top:198.22px" width="4" height="5"><path d="M0.6 0.5 L3.1 2.5 L0.6 4.5Z" fill="none" stroke="#6a6a6a" stroke-width="0.9"/></svg>
<div class="a" style="left:29.5px;top:200.72px;width:1px;height:1px;background:#aaa"></div>
<svg class="a" style="left:31.9px;top:197.02px" width="7.1" height="6.4"><rect x="0" y="0" width="7.1" height="6.4" fill="#fff500"/><path d="M0.4 5.9 L2.3 2.1 L4.2 3.6 M4.6 1 Q7 3 5 4.5 Q3.5 5.5 5.5 6.8" fill="none" stroke="#000" stroke-width="0.95"/><circle cx="2" cy="2.9" r="0.8" fill="#1030e0"/><circle cx="4.4" cy="4" r="0.8" fill="#1030e0"/></svg>
<div class="t tr" style="left:41.7px;top:196.39px">vl_5</div>
<svg class="a" style="left:24.8px;top:206.19px" width="4" height="5"><path d="M0.6 0.5 L3.1 2.5 L0.6 4.5Z" fill="none" stroke="#6a6a6a" stroke-width="0.9"/></svg>
<div class="a" style="left:29.5px;top:208.69px;width:1px;height:1px;background:#aaa"></div>
<svg class="a" style="left:31.9px;top:204.99px" width="7.1" height="6.4"><rect x="0" y="0" width="7.1" height="6.4" fill="#fff500"/><path d="M0.4 5.9 L2.3 2.1 L4.2 3.6 M4.6 1 Q7 3 5 4.5 Q3.5 5.5 5.5 6.8" fill="none" stroke="#000" stroke-width="0.95"/><circle cx="2" cy="2.9" r="0.8" fill="#1030e0"/><circle cx="4.4" cy="4" r="0.8" fill="#1030e0"/></svg>
<div class="t tr" style="left:41.7px;top:204.36px">vl_6</div>
<svg class="a" style="left:24.8px;top:214.16px" width="4" height="5"><path d="M0.6 0.5 L3.1 2.5 L0.6 4.5Z" fill="none" stroke="#6a6a6a" stroke-width="0.9"/></svg>
<div class="a" style="left:29.5px;top:216.66px;width:1px;height:1px;background:#aaa"></div>
<svg class="a" style="left:31.9px;top:212.96px" width="7.1" height="6.4"><rect x="0" y="0" width="7.1" height="6.4" fill="#fff500"/><path d="M0.4 5.9 L2.3 2.1 L4.4 4.1 L5.6 1.6 L6.6 0.8" fill="none" stroke="#000" stroke-width="0.95"/><circle cx="2" cy="2.9" r="0.8" fill="#1030e0"/><circle cx="4.4" cy="4" r="0.8" fill="#1030e0"/></svg>
<div class="t tr" style="left:41.7px;top:212.33px">vl_7</div>
<svg class="a" style="left:24.8px;top:222.13px" width="4" height="5"><path d="M0.6 0.5 L3.1 2.5 L0.6 4.5Z" fill="none" stroke="#6a6a6a" stroke-width="0.9"/></svg>
<div class="a" style="left:29.5px;top:224.63px;width:1px;height:1px;background:#aaa"></div>
<svg class="a" style="left:31.9px;top:220.93px" width="7.1" height="6.4"><rect x="0" y="0" width="7.1" height="6.4" fill="#fff500"/><path d="M0.4 5.9 L2.3 2.1 L4.4 4.1 L5.6 1.6 L6.6 0.8" fill="none" stroke="#000" stroke-width="0.95"/><circle cx="2" cy="2.9" r="0.8" fill="#1030e0"/><circle cx="4.4" cy="4" r="0.8" fill="#1030e0"/></svg>
<div class="t tr" style="left:41.7px;top:220.30px">W</div>
<svg class="a" style="left:24.8px;top:230.10px" width="4" height="5"><path d="M0.6 0.5 L3.1 2.5 L0.6 4.5Z" fill="none" stroke="#6a6a6a" stroke-width="0.9"/></svg>
<div class="a" style="left:29.5px;top:232.60px;width:1px;height:1px;background:#aaa"></div>
<svg class="a" style="left:31.9px;top:228.90px" width="7.1" height="6.4"><rect x="0" y="0" width="7.1" height="6.4" fill="#fff500"/><path d="M0.4 5.9 L2.3 2.1 L4.4 4.1 L5.6 1.6 L6.6 0.8" fill="none" stroke="#000" stroke-width="0.95"/><circle cx="2" cy="2.9" r="0.8" fill="#1030e0"/><circle cx="4.4" cy="4" r="0.8" fill="#1030e0"/></svg>
<div class="t tr" style="left:41.7px;top:228.27px">X</div>
<svg class="a" style="left:24.8px;top:238.07px" width="4" height="5"><path d="M0.6 0.5 L3.1 2.5 L0.6 4.5Z" fill="none" stroke="#6a6a6a" stroke-width="0.9"/></svg>
<div class="a" style="left:29.5px;top:240.57px;width:1px;height:1px;background:#aaa"></div>
<svg class="a" style="left:31.9px;top:236.87px" width="7.1" height="6.4"><rect x="0" y="0" width="7.1" height="6.4" fill="#fff500"/><path d="M0.4 5.9 L2.3 2.1 L4.4 4.1 L5.6 1.6 L6.6 0.8" fill="none" stroke="#000" stroke-width="0.95"/><circle cx="2" cy="2.9" r="0.8" fill="#1030e0"/><circle cx="4.4" cy="4" r="0.8" fill="#1030e0"/></svg>
<div class="t tr" style="left:41.7px;top:236.24px">Y</div>
<svg class="a" style="left:15.2px;top:246.04px" width="4" height="5"><path d="M0.6 0.5 L3.1 2.5 L0.6 4.5Z" fill="#fff" stroke="#6a6a6a" stroke-width="0.9"/></svg>
<div class="a" style="left:20px;top:248.54px;width:1px;height:1px;background:#aaa"></div>
<svg class="a" style="left:22px;top:245.04px" width="7.2" height="7"><rect width="7.2" height="7" fill="#fff700"/><path d="M0.5 6.8 L6.8 0.3" stroke="#000" stroke-width="1.2"/></svg>
<div class="t tr" style="left:31.8px;top:244.21px">Lines</div>
<div class="a" style="left:16.5px;top:256.51px;width:4.5px;height:1px;background:#9c9c9c"></div>
<svg class="a" style="left:21.2px;top:252.71px" width="7.6" height="7.6"><path d="M1 2 L4 0.6 L7 2.5 L5.5 6.8 L2.5 7 Z" fill="#ffe000" stroke="#1a3ad0" stroke-width="1.1"/><path d="M3 3 L5 2.5 L3.5 5.5" stroke="#e01010" stroke-width="1.2" fill="none"/></svg>
<div class="t tr" style="left:32px;top:252.18px">Snakes</div>
<svg class="a" style="left:21.8px;top:260.50px" width="7.4" height="4"><rect width="7.4" height="6" fill="#2040c0"/><rect x="1" y="1" width="2" height="3" fill="#f0d000"/><rect x="3" y="1" width="2" height="3" fill="#e02020"/><rect x="5" y="1" width="1.5" height="3" fill="#20c020"/></svg>
<div class="a" style="left:0;top:264px;width:113px;height:3px;background:#f0f0f0"></div>
<div class="a" style="left:31.8px;top:260.50px;height:3.8px;overflow:hidden;width:60px"><div class="t tr" style="left:0;top:0">TabFoot Section</div></div>
<div class="a" style="left:0;top:277px;width:1.5px;height:142px;background:#6a6a6a"></div>
<div class="a" style="left:1.5px;top:279px;width:110px;height:9px;background:#f0f0f0;border-top:1px solid #fff;border-bottom:1px solid #7a7a7a"></div>
<div class="a" style="left:1.5px;top:288px;width:110px;height:1px;background:#fff"></div>
<div class="a" style="left:104px;top:279px;width:7px;height:9px;border:1px solid #666;background:#fafafa"></div>
<svg class="a" style="left:105.5px;top:280px" width="5" height="7"><circle cx="2.5" cy="2" r="1.6" fill="#f0e000" stroke="#222" stroke-width="0.7"/><path d="M2.5 3.5 V6.5" stroke="#222" stroke-width="1"/></svg>
<div class="a" style="left:4px;top:434px;width:10px;height:9.5px;border:1px solid #404040;border-radius:1.5px;background:#fafafa"></div>
<div class="a" style="left:16px;top:434px;width:10px;height:9.5px;border:1px solid #a8a8a8;border-radius:1.5px;background:#fafafa"></div>
<div class="a" style="left:28px;top:434px;width:10px;height:9.5px;border:1px solid #a8a8a8;border-radius:1.5px;background:#fafafa"></div>
<div class="a" style="left:40px;top:434px;width:10px;height:9.5px;border:1px solid #a8a8a8;border-radius:1.5px;background:#fafafa"></div>
<div class="a" style="left:52px;top:434px;width:10px;height:9.5px;border:1px solid #a8a8a8;border-radius:1.5px;background:#fafafa"></div>
<svg class="a" style="left:5px;top:434px" width="60" height="9"><path d="M2.5 2 H7.5 M2.5 7 H7.5 M3.5 2 V7 M5 2 V7 M6.5 2 V7" stroke="#222" stroke-width="0.9"/><path d="M15 7.5 V3 M13 5 L15 2.5 L17 5" stroke="#222" stroke-width="1.1" fill="none"/><path d="M27 1.5 V6 M25 4 L27 6.5 L29 4" stroke="#222" stroke-width="1.1" fill="none"/><path d="M38.5 2 L43 7 M43 2 L38.5 7" stroke="#c02020" stroke-width="1"/><rect x="48.5" y="1" width="8" height="7" fill="none" stroke="#3050c0" stroke-width="1"/><path d="M50.5 2.5 L55 7 M55 2.5 L50.5 7" stroke="#c02020" stroke-width="1"/></svg>
<div class="t tr" style="left:65px;top:434.3px;-webkit-text-stroke:0.1px #000">0 Entities</div>
<div class="a" style="left:3px;top:445px;width:108px;height:70px;border:1px solid #a8a8a8;background:#fff"></div>
<div class="a" style="left:4px;top:446px;width:106px;height:11px;background:linear-gradient(#fafafa,#ececec);border-bottom:1px solid #d4d4d4"></div>
<div class="a" style="left:62px;top:446px;width:1px;height:11px;background:#d8d8d8"></div>
<div class="a" style="left:95px;top:446px;width:1px;height:11px;background:#d8d8d8"></div>
<div class="a" style="left:106px;top:446px;width:1px;height:11px;background:#d8d8d8"></div>
<div class="t tr" style="left:7px;top:447.5px">Name</div>
<div class="t tr" style="left:65.5px;top:447.5px">Type</div>
<div class="t tr" style="left:97px;top:447.5px">C...</div>
<div class="a" style="left:4px;top:505px;width:106px;height:9px;background:#f0f0f0"></div>
<div class="a" style="left:10px;top:505.5px;width:85.5px;height:8px;border:1px solid #8a8a8a;border-radius:2px;background:linear-gradient(#f4f4f4,#d8d8d8)"></div>
<div class="a" style="left:50.5px;top:508px;width:4px;height:3px;background:#aaa;border:0.5px solid #666"></div>
<svg class="a" style="left:4px;top:507px" width="4" height="5"><path d="M3.2 0.5 L0.8 2.5 L3.2 4.5Z" fill="#222"/></svg>
<svg class="a" style="left:104px;top:507px" width="4" height="5"><path d="M0.8 0.5 L3.2 2.5 L0.8 4.5Z" fill="#222"/></svg>
<div class="a" style="left:0;top:432px;width:1.5px;height:83px;background:#8a8a8a"></div>
<div class="a" style="left:0;top:514px;width:700px;height:11px;background:#f0f0f0;border-top:1px solid #fcfcfc"></div>
<div class="a" style="left:317.0px;top:516px;width:158.5px;height:7.5px;border-top:1px solid #8c8c8c;border-left:1px solid #b0b0b0;background:#f2f2f2"></div>
<div class="t ts" style="left:318.5px;top:516.3px">L0</div>
<div class="a" style="left:476.0px;top:516px;width:47.5px;height:7.5px;border-top:1px solid #8c8c8c;border-left:1px solid #b0b0b0;background:#f2f2f2"></div>
<div class="a" style="left:524.0px;top:516px;width:37.5px;height:7.5px;border-top:1px solid #8c8c8c;border-left:1px solid #b0b0b0;background:#f2f2f2"></div>
<div class="t ts" style="left:525.5px;top:516.3px">Lat -7.5</div>
<div class="a" style="left:562.0px;top:516px;width:37.5px;height:7.5px;border-top:1px solid #8c8c8c;border-left:1px solid #b0b0b0;background:#f2f2f2"></div>
<div class="t ts" style="left:563.5px;top:516.3px">Lon 54.5</div>
<div class="a" style="left:600.0px;top:516px;width:54.5px;height:7.5px;border-top:1px solid #8c8c8c;border-left:1px solid #b0b0b0;background:#f2f2f2"></div>
<div class="t ts" style="left:601.5px;top:516.3px">Radius 27.8</div>
<div class="a" style="left:655.0px;top:516px;width:40.0px;height:7.5px;border-top:1px solid #8c8c8c;border-left:1px solid #b0b0b0;background:#f2f2f2"></div>
<div class="t ts" style="left:656.5px;top:516.3px">Tilt 0.0</div>
<div class="a" style="left:0;top:516px;width:317px;height:1px;background:#dedede"></div>
<div class="a" style="left:0;top:523px;width:700px;height:2px;background:linear-gradient(#8c949e,#a8b0ba)"></div>
<div class="a" style="left:98px;top:523px;width:1px;height:2px;background:#d8dce2"></div>
<div class="a" style="left:178px;top:523px;width:1px;height:2px;background:#d8dce2"></div>
<div class="a" style="left:258px;top:523px;width:1px;height:2px;background:#d8dce2"></div>
<div class="a" style="left:338px;top:523px;width:1px;height:2px;background:#d8dce2"></div>
<div class="a" style="left:418px;top:523px;width:1px;height:2px;background:#d8dce2"></div>
<div class="a" style="left:498px;top:523px;width:1px;height:2px;background:#d8dce2"></div>
<div class="a" style="left:578px;top:523px;width:1px;height:2px;background:#d8dce2"></div>
</body></html>
